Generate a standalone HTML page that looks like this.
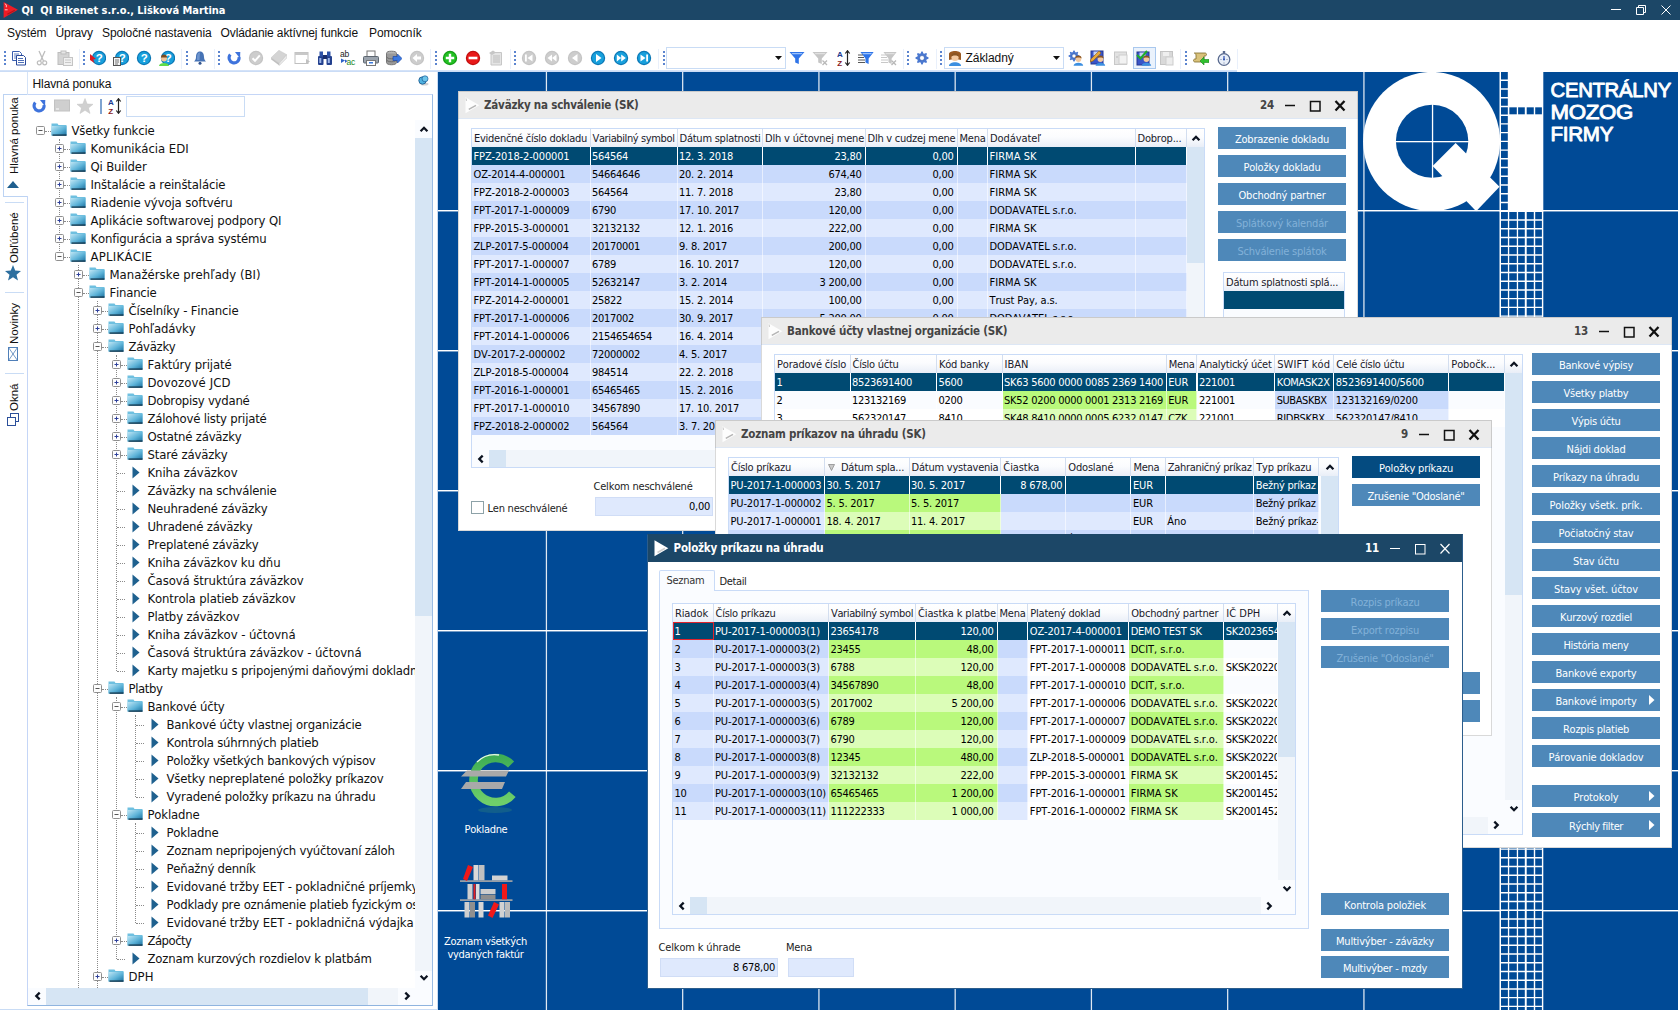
<!DOCTYPE html><html lang="sk"><head><meta charset="utf-8"><title>QI Bikenet s.r.o.</title><style>
*{box-sizing:border-box;margin:0;padding:0}
html,body{width:1680px;height:1010px;overflow:hidden;background:#fff}
body{position:relative;font-family:"DejaVu Sans Condensed","DejaVu Sans","Liberation Sans",sans-serif;font-size:11px;color:#000;letter-spacing:-0.3px;font-kerning:none;font-variant-ligatures:none}
.abs{position:absolute}
#titlebar{position:absolute;left:0;top:0;width:1680px;height:20px;background:#1c4767;color:#fff;font-weight:bold;font-size:11px;letter-spacing:-0.04px;white-space:pre}
#titlebar span{position:absolute;left:21.500px;top:4px;line-height:14px}
#menubar{position:absolute;left:0;top:20px;width:1680px;height:25px;background:#fff;font-family:"Liberation Sans",sans-serif;font-size:12px;letter-spacing:-0.1px;color:#111}
#menubar span{position:absolute;top:5px;line-height:16px;white-space:nowrap}
#toolbar{position:absolute;left:0;top:45px;width:1680px;height:27px;background:#fff}
#tbline{position:absolute;left:0;top:70px;width:1237px;height:2px;background:linear-gradient(#d9e6f9,#c5d9f5)}
.ico{position:absolute;top:50px;width:16px;height:16px}
.grip{position:absolute;top:50px;width:3px;height:17px}
#desk{position:absolute;left:438px;top:72px;width:1240px;height:938px;background:#004a96;overflow:hidden}
.win{position:absolute;background:#fff;overflow:hidden}
.wb{position:absolute;left:0;top:0;right:0;bottom:0;border:1px solid rgba(120,120,120,.28);pointer-events:none}
.wt{position:absolute;left:0;top:0;right:0;height:28px;background:#ebebeb;border-bottom:1px solid #dde7f5}
.wt .t{position:absolute;left:26px;top:7px;font-weight:bold;font-size:11.5px;letter-spacing:-0.2px;color:#444;white-space:nowrap;line-height:15px}
.wt .n{position:absolute;top:7px;font-weight:bold;font-size:11.5px;color:#444;line-height:15px;text-align:right;width:30px;letter-spacing:-0.2px}
.wt svg{position:absolute}
.grid{position:absolute;background:#fafcff;border:1px solid #c9dbf7;overflow:hidden}
.gh{position:absolute;top:0;height:18px;background:linear-gradient(#ffffff,#fbfcfe 45%,#e9eef7);border-right:1px solid #d3deef;padding:3px 0 0 2px;white-space:nowrap;overflow:hidden;color:#1a1a2a;line-height:13px;letter-spacing:-0.23px}
.c{position:absolute;height:18px;padding:3px 0 0 1.500px;white-space:nowrap;overflow:hidden;line-height:13px;letter-spacing:0.05px;border-right:1px solid rgba(255,255,255,.55)}
.c.r{text-align:right;padding-right:3px;padding-left:0}
.c.s{background:#004a72;color:#fff;border-right:1px solid #fff}
.btn{position:absolute;height:22px;background:#4e88b9;color:#fff;text-align:center;line-height:21px;white-space:nowrap;padding-top:2px}
.btn.d{color:#82b1d8}
.btn.a{background:#044b80}
.sb{position:absolute;background:#f1f5fa}
.th{position:absolute;background:#d6e5f4}
.fld{position:absolute;background:#dfe9fd;border:1px solid #d0ddf6;text-align:right;padding:2px 2px 0 0;line-height:13px;letter-spacing:0.05px}
.lbl{position:absolute;white-space:nowrap;line-height:13px;color:#222}
#left{position:absolute;left:0;top:72px;width:438px;height:938px;background:#fff}
.tr{position:absolute;height:18px;line-height:17px;font-size:13px;letter-spacing:-0.1px;white-space:nowrap;color:#111}
.vt{position:absolute;transform-origin:0 0;transform:rotate(-90deg);white-space:nowrap;font-family:"Liberation Sans",sans-serif;font-size:11.5px;letter-spacing:0;color:#111;line-height:14px}
</style></head><body>
<div id="titlebar">
<svg class="abs" style="left:2px;top:2px" width="18" height="16" viewBox="0 0 18 16"><polygon points="1.600,0 15.900,7.700 1.600,15.900" fill="#ee1c25"/><path d="M5.400 12.200l7.300-4" stroke="#b3151c" stroke-width="1.300"/><path d="M2.800 1.800l1.500 1v2.500M2.800 7.800h2.800" stroke="#ffd9d9" stroke-width=".9" fill="none"/></svg>
<span>QI  QI Bikenet s.r.o., Lišková Martina</span>
<svg class="abs" style="left:1606px;top:0" width="74" height="20" viewBox="0 0 74 20" fill="none" stroke="#fff" stroke-width="1"><path d="M5 9.5H15"/><path d="M30.5 7.5h7v7h-7zM32.5 7.5v-2h7v7h-2"/><path d="M55.5 5.5l9 9M64.5 5.5l-9 9"/></svg>
</div>
<div id="menubar">
<span style="left:7px">Systém</span>
<span style="left:55.5px">Úpravy</span>
<span style="left:102px">Spoločné nastavenia</span>
<span style="left:220.5px">Ovládanie aktívnej funkcie</span>
<span style="left:369px">Pomocník</span>
</div>
<div id="toolbar"></div><div id="tbline"></div>
<div class="abs" style="left:78.5px;top:49px;width:1px;height:20px;background:#e9f0fb"></div>
<div class="abs" style="left:181px;top:49px;width:1px;height:20px;background:#e9f0fb"></div>
<div class="abs" style="left:213.5px;top:49px;width:1px;height:20px;background:#e9f0fb"></div>
<div class="abs" style="left:430px;top:49px;width:1px;height:20px;background:#e9f0fb"></div>
<div class="abs" style="left:510px;top:49px;width:1px;height:20px;background:#e9f0fb"></div>
<div class="abs" style="left:658px;top:49px;width:1px;height:20px;background:#e9f0fb"></div>
<div class="abs" style="left:903px;top:49px;width:1px;height:20px;background:#e9f0fb"></div>
<div class="abs" style="left:936px;top:49px;width:1px;height:20px;background:#e9f0fb"></div>
<div class="abs" style="left:1180px;top:49px;width:1px;height:20px;background:#e9f0fb"></div>
<div class="abs" style="left:1237px;top:49px;width:1px;height:20px;background:#e9f0fb"></div>
<div class="abs" style="left:1133px;top:47px;width:23px;height:22px;border:1px solid #a9c8ee;background:#eaf2fc"></div>
<svg class="abs" style="left:4px;top:50px" width="3" height="17" viewBox="0 0 3 17"><rect x="0" y="1" width="2" height="2" fill="#5b84cf"/><rect x="0" y="5" width="2" height="2" fill="#5b84cf"/><rect x="0" y="9" width="2" height="2" fill="#5b84cf"/><rect x="0" y="13" width="2" height="2" fill="#5b84cf"/></svg>
<svg class="abs" style="left:10.5px;top:50px" width="16" height="16" viewBox="0 0 16 16"><path d="M1.5 1.5h7l2 2v7h-9z" fill="#fff" stroke="#3a5fb0"/><path d="M3 4h5M3 6h6M3 8h6" stroke="#3a5fb0" stroke-width=".8"/><path d="M5.5 5.5h7l2 2v7.5h-9z" fill="#fff" stroke="#2a4a9a"/><path d="M7 8.5h5M7 10.5h6M7 12.5h6" stroke="#3a5fb0" stroke-width=".9"/></svg>
<svg class="abs" style="left:34px;top:50px" width="16" height="16" viewBox="0 0 16 16"><path d="M5 1l4.5 10M11 1L6.5 11" stroke="#bdbdbd" stroke-width="1.3" fill="none"/><circle cx="5.3" cy="12.8" r="2" fill="none" stroke="#bdbdbd" stroke-width="1.2"/><circle cx="10.7" cy="12.8" r="2" fill="none" stroke="#bdbdbd" stroke-width="1.2"/></svg>
<svg class="abs" style="left:57px;top:50px" width="16" height="16" viewBox="0 0 16 16"><rect x="1" y="2.5" width="11" height="12" fill="#d4d4d4" stroke="#bdbdbd"/><rect x="4" y="1" width="5" height="3" fill="#e6e6e6" stroke="#bdbdbd"/><rect x="6.5" y="7.5" width="9" height="8" fill="#f0f0f0" stroke="#c4c4c4"/><path d="M8 10h6M8 12.5h6" stroke="#c8c8c8"/></svg>
<svg class="abs" style="left:83px;top:50px" width="3" height="17" viewBox="0 0 3 17"><rect x="0" y="1" width="2" height="2" fill="#5b84cf"/><rect x="0" y="5" width="2" height="2" fill="#5b84cf"/><rect x="0" y="9" width="2" height="2" fill="#5b84cf"/><rect x="0" y="13" width="2" height="2" fill="#5b84cf"/></svg>
<svg class="abs" style="left:90px;top:50px" width="16" height="16" viewBox="0 0 16 16"><g transform="translate(1,0)"><circle cx="8" cy="8" r="7.2" fill="#0b77b5"/><circle cx="8" cy="8" r="6" fill="#18a0dc"/><text x="8" y="12.2" font-family="Liberation Sans,sans-serif" font-weight="bold" font-size="11.5" fill="#fff" text-anchor="middle">?</text></g><polygon points="0,4 6,9 3,9.5 4.5,13 0,10" fill="#e01b24"/></svg>
<svg class="abs" style="left:113px;top:50px" width="16" height="16" viewBox="0 0 16 16"><g transform="translate(1,0)"><circle cx="8" cy="8" r="7.2" fill="#0b77b5"/><circle cx="8" cy="8" r="6" fill="#18a0dc"/><text x="8" y="12.2" font-family="Liberation Sans,sans-serif" font-weight="bold" font-size="11.5" fill="#fff" text-anchor="middle">?</text></g><rect x="0.5" y="7.5" width="7" height="8" fill="#f4f4f4" stroke="#555"/><path d="M2 10h4M2 12h4M2 14h3" stroke="#555" stroke-width=".8"/></svg>
<svg class="abs" style="left:136px;top:50px" width="16" height="16" viewBox="0 0 16 16"><circle cx="8" cy="8" r="7.2" fill="#0b77b5"/><circle cx="8" cy="8" r="6" fill="#18a0dc"/><text x="8" y="12.2" font-family="Liberation Sans,sans-serif" font-weight="bold" font-size="11.5" fill="#fff" text-anchor="middle">?</text></svg>
<svg class="abs" style="left:159px;top:50px" width="16" height="16" viewBox="0 0 16 16"><g transform="translate(1,0)"><circle cx="8" cy="8" r="7.2" fill="#0b77b5"/><circle cx="8" cy="8" r="6" fill="#18a0dc"/><text x="8" y="12.2" font-family="Liberation Sans,sans-serif" font-weight="bold" font-size="11.5" fill="#fff" text-anchor="middle">?</text></g><circle cx="5" cy="8.5" r="3" fill="#f0c49a"/><path d="M2 7.5a3 3 0 0 1 6 0z" fill="#7a4a1e"/><path d="M0 16c0-4 10-4 10 0z" fill="#5fdc4a"/></svg>
<svg class="abs" style="left:185.5px;top:50px" width="3" height="17" viewBox="0 0 3 17"><rect x="0" y="1" width="2" height="2" fill="#5b84cf"/><rect x="0" y="5" width="2" height="2" fill="#5b84cf"/><rect x="0" y="9" width="2" height="2" fill="#5b84cf"/><rect x="0" y="13" width="2" height="2" fill="#5b84cf"/></svg>
<svg class="abs" style="left:192px;top:50px" width="16" height="16" viewBox="0 0 16 16"><path d="M8 1.5c-3 0-4 2.5-4 5.5 0 2.5-1 3.5-2 4.5h12c-1-1-2-2-2-4.500 0-3-1-5.500-4-5.500z" fill="#4673b5"/><path d="M8 2.500c-2 0-3 2-3 4.500v3h2.500z" fill="#7ea3d8" opacity=".7"/><circle cx="8" cy="13.200" r="1.500" fill="#35568f"/></svg>
<svg class="abs" style="left:218px;top:50px" width="3" height="17" viewBox="0 0 3 17"><rect x="0" y="1" width="2" height="2" fill="#5b84cf"/><rect x="0" y="5" width="2" height="2" fill="#5b84cf"/><rect x="0" y="9" width="2" height="2" fill="#5b84cf"/><rect x="0" y="13" width="2" height="2" fill="#5b84cf"/></svg>
<svg class="abs" style="left:225.5px;top:50px" width="16" height="16" viewBox="0 0 16 16"><path d="M4.300 4.600A5 5 0 1 0 13 7" fill="none" stroke="#3e73dc" stroke-width="3.100"/><polygon points="9,2 14.300,2 14,8.600" fill="#3e73dc"/></svg>
<svg class="abs" style="left:248px;top:50px" width="16" height="16" viewBox="0 0 16 16"><circle cx="8" cy="8" r="7.2" fill="#c4c4c4"/><circle cx="8" cy="8" r="6" fill="#cdcdcd"/><path d="M4.500 8.200l2.500 2.600 4.800-5.500" fill="none" stroke="#fff" stroke-width="2"/></svg>
<svg class="abs" style="left:271px;top:50px" width="16" height="16" viewBox="0 0 16 16"><polygon points="0.200,7.600 7.900,0.300 15.800,4.700 8.300,13.200" fill="#d4d4d4" stroke="#c6c6c6" stroke-width=".5"/><polygon points="0.200,7.600 8.300,13.200 8.300,15.400 0.200,9.600" fill="#c0c0c0"/><polygon points="8.300,13.200 15.800,4.700 15.800,7.900 8.300,15.400" fill="#ececec" stroke="#c6c6c6" stroke-width=".6"/></svg>
<svg class="abs" style="left:294px;top:50px" width="16" height="16" viewBox="0 0 16 16"><rect x="1" y="2.500" width="13" height="11" fill="#fff" stroke="#c0c0c0"/><rect x="1" y="2.500" width="13" height="2.500" fill="#c8c8c8"/><polygon points="12,9 16,11.500 12,14" fill="#c0c0c0"/></svg>
<svg class="abs" style="left:317px;top:50px" width="16" height="16" viewBox="0 0 16 16"><rect x="1" y="6" width="5.500" height="9" rx="1" fill="#23408e"/><rect x="9.500" y="6" width="5.500" height="9" rx="1" fill="#23408e"/><rect x="2.500" y="1.500" width="3.500" height="5" fill="#2e53a8"/><rect x="10" y="1.500" width="3.500" height="5" fill="#2e53a8"/><rect x="6" y="5" width="4" height="4" fill="#1a2f6e"/><rect x="2.300" y="8" width="2" height="5" fill="#9db6e8"/><rect x="10.800" y="8" width="2" height="5" fill="#9db6e8"/></svg>
<svg class="abs" style="left:339.5px;top:50px" width="16" height="16" viewBox="0 0 16 16"><text x="0" y="6.500" font-family="Liberation Sans,sans-serif" font-size="8.500" fill="#222">ab</text><text x="6.500" y="15" font-family="Liberation Sans,sans-serif" font-size="8.500" fill="#1d8a2a">ac</text><path d="M1 8.500l4 2-4 2.500z M5 9.500l2.500 1.500-2.500 2" fill="#2d62c8"/></svg>
<svg class="abs" style="left:363px;top:50px" width="16" height="16" viewBox="0 0 16 16"><rect x="4" y="1" width="8" height="6" fill="#fff" stroke="#777"/><rect x="0.500" y="6.500" width="15" height="6.500" rx="1" fill="#9aa3ad" stroke="#5d6670"/><rect x="3.500" y="10.500" width="9" height="5" fill="#fff" stroke="#777"/><rect x="6" y="12" width="4" height="1.500" fill="#3b7be0"/></svg>
<svg class="abs" style="left:386px;top:50px" width="16" height="16" viewBox="0 0 16 16"><ellipse cx="5.500" cy="3.500" rx="5" ry="2.300" fill="#b5b5b5" stroke="#777"/><path d="M0.500 3.500v9c0 3 10 3 10 0v-9" fill="#9a9a9a" stroke="#777"/><path d="M0.500 6.500c0 3 10 3 10 0M0.500 9.500c0 3 10 3 10 0" fill="none" stroke="#6e6e6e"/><polygon points="7,6.500 11.500,6.500 11.500,4 16,8.500 11.500,13 11.500,10.500 7,10.500" fill="#3a78e0" stroke="#1c49a8" stroke-width=".7"/></svg>
<svg class="abs" style="left:409px;top:50px" width="16" height="16" viewBox="0 0 16 16"><circle cx="8" cy="8" r="7.2" fill="#c4c4c4"/><circle cx="8" cy="8" r="6" fill="#cdcdcd"/><polygon points="3.500,8 8,4 8,6.500 12,6.500 12,9.500 8,9.500 8,12" fill="#fff"/></svg>
<svg class="abs" style="left:435px;top:50px" width="3" height="17" viewBox="0 0 3 17"><rect x="0" y="1" width="2" height="2" fill="#5b84cf"/><rect x="0" y="5" width="2" height="2" fill="#5b84cf"/><rect x="0" y="9" width="2" height="2" fill="#5b84cf"/><rect x="0" y="13" width="2" height="2" fill="#5b84cf"/></svg>
<svg class="abs" style="left:442px;top:50px" width="16" height="16" viewBox="0 0 16 16"><circle cx="8" cy="8" r="7.2" fill="#149c14"/><circle cx="8" cy="8" r="6" fill="#22c022"/><path d="M8 3.800v8.400M3.800 8h8.400" stroke="#fff" stroke-width="2.400"/></svg>
<svg class="abs" style="left:465px;top:50px" width="16" height="16" viewBox="0 0 16 16"><circle cx="8" cy="8" r="7.2" fill="#c00d0d"/><circle cx="8" cy="8" r="6" fill="#e81818"/><path d="M3.600 8h8.800" stroke="#fff" stroke-width="2.600"/></svg>
<svg class="abs" style="left:487.5px;top:50px" width="16" height="16" viewBox="0 0 16 16"><polygon points="3,2.500 13.500,2.500 13.500,15 3,15" fill="#e4e4e4" stroke="#c6c6c6"/><path d="M5 6h7M5 8h7M5 10h7M5 12h7" stroke="#bdbdbd"/><polygon points="1,3 5,0.500 8,2.500 4,5" fill="#c6c6c6"/></svg>
<svg class="abs" style="left:514px;top:50px" width="3" height="17" viewBox="0 0 3 17"><rect x="0" y="1" width="2" height="2" fill="#5b84cf"/><rect x="0" y="5" width="2" height="2" fill="#5b84cf"/><rect x="0" y="9" width="2" height="2" fill="#5b84cf"/><rect x="0" y="13" width="2" height="2" fill="#5b84cf"/></svg>
<svg class="abs" style="left:521px;top:50px" width="16" height="16" viewBox="0 0 16 16"><circle cx="8" cy="8" r="7.2" fill="#c4c4c4"/><circle cx="8" cy="8" r="6" fill="#cdcdcd"/><rect x="4" y="4.500" width="1.800" height="7" fill="#fff"/><polygon points="11.500,4.500 11.500,11.500 6.500,8" fill="#fff"/></svg>
<svg class="abs" style="left:544px;top:50px" width="16" height="16" viewBox="0 0 16 16"><circle cx="8" cy="8" r="7.2" fill="#c4c4c4"/><circle cx="8" cy="8" r="6" fill="#cdcdcd"/><polygon points="8,4.500 8,11.500 3.500,8" fill="#fff"/><polygon points="12.500,4.500 12.500,11.500 8,8" fill="#fff"/></svg>
<svg class="abs" style="left:567px;top:50px" width="16" height="16" viewBox="0 0 16 16"><circle cx="8" cy="8" r="7.2" fill="#c4c4c4"/><circle cx="8" cy="8" r="6" fill="#cdcdcd"/><polygon points="10.500,4 10.500,12 5,8" fill="#fff"/></svg>
<svg class="abs" style="left:590px;top:50px" width="16" height="16" viewBox="0 0 16 16"><circle cx="8" cy="8" r="7.2" fill="#0b77b5"/><circle cx="8" cy="8" r="6" fill="#18a0dc"/><polygon points="6,4 6,12 11.500,8" fill="#fff"/></svg>
<svg class="abs" style="left:613px;top:50px" width="16" height="16" viewBox="0 0 16 16"><circle cx="8" cy="8" r="7.2" fill="#0b77b5"/><circle cx="8" cy="8" r="6" fill="#18a0dc"/><polygon points="3.800,4.500 3.800,11.500 8.200,8" fill="#fff"/><polygon points="8.200,4.500 8.200,11.500 12.800,8" fill="#fff"/></svg>
<svg class="abs" style="left:636px;top:50px" width="16" height="16" viewBox="0 0 16 16"><circle cx="8" cy="8" r="7.2" fill="#0b77b5"/><circle cx="8" cy="8" r="6" fill="#18a0dc"/><rect x="10.200" y="4.500" width="1.800" height="7" fill="#fff"/><polygon points="4.500,4.500 4.500,11.500 9.500,8" fill="#fff"/></svg>
<svg class="abs" style="left:662.5px;top:50px" width="3" height="17" viewBox="0 0 3 17"><rect x="0" y="1" width="2" height="2" fill="#5b84cf"/><rect x="0" y="5" width="2" height="2" fill="#5b84cf"/><rect x="0" y="9" width="2" height="2" fill="#5b84cf"/><rect x="0" y="13" width="2" height="2" fill="#5b84cf"/></svg>
<svg class="abs" style="left:789px;top:50px" width="16" height="16" viewBox="0 0 16 16"><polygon points="0.500,2 15.500,2 9.800,8.500 9.800,14 6.200,12.500 6.200,8.500" fill="#2f74e8"/><polygon points="2.500,3 13.500,3 12.500,4.200 3.500,4.200" fill="#9cc2fb"/></svg>
<svg class="abs" style="left:812px;top:50px" width="16" height="16" viewBox="0 0 16 16"><polygon points="0.500,2 15.500,2 9.800,8.500 9.800,14 6.200,12.500 6.200,8.500" fill="#c6c6c6"/><polygon points="2.500,3 13.500,3 12.500,4.200 3.500,4.200" fill="#e0e0e0"/><path d="M10.500 10.500l4.500 4.500M15 10.500l-4.500 4.500" stroke="#b8b8b8" stroke-width="1.300"/></svg>
<svg class="abs" style="left:837px;top:50px" width="16" height="16" viewBox="0 0 16 16"><text x="0" y="7" font-family="Liberation Sans,sans-serif" font-weight="bold" font-size="8" fill="#1d3a8f">A</text><text x="0.300" y="15.500" font-family="Liberation Sans,sans-serif" font-weight="bold" font-size="8" fill="#8a1c1c">Z</text><path d="M10.500 1v14M8.300 3.500l2.200-2.800 2.200 2.800M8.300 12.500l2.200 2.800 2.200-2.800" fill="none" stroke="#222" stroke-width="1.200"/></svg>
<svg class="abs" style="left:858px;top:50px" width="16" height="16" viewBox="0 0 16 16"><g transform="translate(2,0) scale(.88,1)"><polygon points="0.500,2 15.500,2 9.800,8.500 9.800,14 6.200,12.500 6.200,8.500" fill="#2f74e8"/><polygon points="2.500,3 13.500,3 12.500,4.200 3.500,4.200" fill="#9cc2fb"/></g><path d="M0 5h5M0 7.500h6M0 10h7M0 12.500h7" stroke="#444" stroke-width=".9"/></svg>
<svg class="abs" style="left:881px;top:50px" width="16" height="16" viewBox="0 0 16 16"><g transform="translate(2,0) scale(.88,1)"><polygon points="0.500,2 15.500,2 9.800,8.500 9.800,14 6.200,12.500 6.200,8.500" fill="#c6c6c6"/><polygon points="2.500,3 13.500,3 12.500,4.200 3.500,4.200" fill="#e0e0e0"/></g><path d="M0 5h5M0 7.500h6M0 10h7M0 12.500h7" stroke="#c2c2c2" stroke-width=".9"/><path d="M10.500 10.500l4.500 4.500M15 10.500l-4.500 4.500" stroke="#b8b8b8" stroke-width="1.300"/></svg>
<svg class="abs" style="left:907px;top:50px" width="3" height="17" viewBox="0 0 3 17"><rect x="0" y="1" width="2" height="2" fill="#5b84cf"/><rect x="0" y="5" width="2" height="2" fill="#5b84cf"/><rect x="0" y="9" width="2" height="2" fill="#5b84cf"/><rect x="0" y="13" width="2" height="2" fill="#5b84cf"/></svg>
<svg class="abs" style="left:914px;top:50px" width="16" height="16" viewBox="0 0 16 16"><polygon points="14.47,7.35 14.47,8.63 12.61,9.39 12.25,10.26 13.03,12.11 12.13,13.02 10.28,12.24 9.40,12.60 8.65,14.47 7.37,14.47 6.61,12.61 5.74,12.25 3.89,13.03 2.98,12.13 3.76,10.28 3.40,9.40 1.53,8.65 1.53,7.37 3.39,6.61 3.75,5.74 2.97,3.89 3.87,2.98 5.72,3.76 6.60,3.40 7.35,1.53 8.63,1.53 9.39,3.39 10.26,3.75 12.11,2.97 13.02,3.87 12.24,5.72 12.60,6.60" fill="#4a78d0"/><circle cx="8" cy="8" r="2.47" fill="#fff"/><circle cx="8" cy="8" r="2.47" fill="none" stroke="#2d55a8" stroke-width=".6"/></svg>
<svg class="abs" style="left:940px;top:50px" width="3" height="17" viewBox="0 0 3 17"><rect x="0" y="1" width="2" height="2" fill="#5b84cf"/><rect x="0" y="5" width="2" height="2" fill="#5b84cf"/><rect x="0" y="9" width="2" height="2" fill="#5b84cf"/><rect x="0" y="13" width="2" height="2" fill="#5b84cf"/></svg>
<svg class="abs" style="left:1067.5px;top:50px" width="16" height="16" viewBox="0 0 16 16"><polygon points="11.47,5.45 11.47,6.53 9.90,7.17 9.59,7.91 10.26,9.48 9.50,10.25 7.93,9.59 7.19,9.89 6.55,11.47 5.47,11.47 4.83,9.90 4.09,9.59 2.52,10.26 1.75,9.50 2.41,7.93 2.11,7.19 0.53,6.55 0.53,5.47 2.10,4.83 2.41,4.09 1.74,2.52 2.50,1.75 4.07,2.41 4.81,2.11 5.45,0.53 6.53,0.53 7.17,2.10 7.91,2.41 9.48,1.74 10.25,2.50 9.59,4.07 9.89,4.81" fill="#4a78d0"/><circle cx="6" cy="6" r="2.09" fill="#fff"/><circle cx="6" cy="6" r="2.09" fill="none" stroke="#2d55a8" stroke-width=".6"/><g transform="translate(4,3) scale(.8)"><g transform="translate(0,0)"><circle cx="8" cy="7.500" r="3.600" fill="#f3c9a0"/><path d="M4 7a4 4 0 0 1 8 0c-1-2-7-2-8 0z" fill="#8a5522"/><path d="M2 16c0-5 12-5 12 0z" fill="#3c8fe0"/></g></g></svg>
<svg class="abs" style="left:1090px;top:50px" width="16" height="16" viewBox="0 0 16 16"><rect x="1" y="1" width="12" height="13" fill="#3a55c8" stroke="#25368f"/><rect x="3.500" y="1.500" width="6" height="4" fill="#c8d4f5"/><g transform="translate(4,3) scale(.8)"><g transform="translate(0,0)"><circle cx="8" cy="7.500" r="3.600" fill="#f3c9a0"/><path d="M4 7a4 4 0 0 1 8 0c-1-2-7-2-8 0z" fill="#8a5522"/><path d="M2 16c0-5 12-5 12 0z" fill="#3c8fe0"/></g></g><path d="M1 9l8-8 2 2-8 8-3 1z" fill="#e8a93a" stroke="#8f5d12" stroke-width=".6"/></svg>
<svg class="abs" style="left:1113px;top:50px" width="16" height="16" viewBox="0 0 16 16"><rect x="1.500" y="2" width="12" height="12.500" fill="#e2e2e2" stroke="#c8c8c8"/><rect x="6" y="5" width="8" height="9" fill="#f2f2f2" stroke="#cdcdcd"/><path d="M3 7h2" stroke="#bbb"/></svg>
<svg class="abs" style="left:1136px;top:50px" width="16" height="16" viewBox="0 0 16 16"><rect x="1" y="2" width="12" height="13" fill="#3a55c8" stroke="#25368f"/><rect x="3.500" y="2.500" width="6" height="4" fill="#c8d4f5"/><g transform="translate(4,3) scale(.8)"><g transform="translate(0,0)"><circle cx="8" cy="7.500" r="3.600" fill="#f3c9a0"/><path d="M4 7a4 4 0 0 1 8 0c-1-2-7-2-8 0z" fill="#8a5522"/><path d="M2 16c0-5 12-5 12 0z" fill="#3c8fe0"/></g></g><path d="M1 5l3.500 3.500 6.500-7.500" fill="none" stroke="#1fae2a" stroke-width="2"/></svg>
<svg class="abs" style="left:1159px;top:50px" width="16" height="16" viewBox="0 0 16 16"><rect x="1.500" y="1.500" width="12" height="13" fill="#d9d9d9" stroke="#c4c4c4"/><rect x="4" y="2" width="6" height="4" fill="#efefef"/><rect x="7" y="7" width="7" height="8" fill="#ececec" stroke="#cdcdcd"/></svg>
<svg class="abs" style="left:1184.5px;top:50px" width="3" height="17" viewBox="0 0 3 17"><rect x="0" y="1" width="2" height="2" fill="#5b84cf"/><rect x="0" y="5" width="2" height="2" fill="#5b84cf"/><rect x="0" y="9" width="2" height="2" fill="#5b84cf"/><rect x="0" y="13" width="2" height="2" fill="#5b84cf"/></svg>
<svg class="abs" style="left:1193px;top:50px" width="16" height="16" viewBox="0 0 16 16"><path d="M2 3h10c2 0 2 3 0 3h-1v6H2c-2 0-2-3 0-3h1V5c0-2-3-2-1-2z" fill="#d9c27a" stroke="#7d6a2a" stroke-width=".8"/><polygon points="7,11 11,7 11,9.500 16,9.500 16,12.500 11,12.500 11,15" fill="#2fc02f" stroke="#18861a" stroke-width=".6"/></svg>
<svg class="abs" style="left:1216px;top:50px" width="16" height="16" viewBox="0 0 16 16"><circle cx="8" cy="9.500" r="5.800" fill="#e8eef8" stroke="#5a6b8f" stroke-width="1.300"/><rect x="6.800" y="1" width="2.400" height="2.500" fill="#5a6b8f"/><path d="M8 9.500V6" stroke="#2c4fb0" stroke-width="1.200"/><circle cx="8" cy="9.500" r="1" fill="#2c4fb0"/><path d="M8 13.500v-1M4.500 9.500h1M10.500 9.500h1" stroke="#5a6b8f" stroke-width=".8"/></svg>
<div class="abs" style="left:666px;top:47px;width:120px;height:22px;border:1px solid #c9dcf5;background:#fff"></div>
<svg class="abs" style="left:775px;top:56px" width="7" height="4"><polygon points="0,0 7,0 3.500,4" fill="#111"/></svg>
<div class="abs" style="left:944px;top:47px;width:120px;height:22px;border:1px solid #c9dcf5;background:#fff"></div>
<svg class="abs" style="left:947px;top:50px" width="16" height="16" viewBox="0 0 16 16"><path d="M2 4c0-4 12-4 12 0v6c-2-1-10-1-12 0z" fill="#9a5a22"/><g transform="translate(0,0)"><circle cx="8" cy="7.500" r="3.600" fill="#f3c9a0"/><path d="M4 7a4 4 0 0 1 8 0c-1-2-7-2-8 0z" fill="#8a5522"/><path d="M2 16c0-5 12-5 12 0z" fill="#3c8fe0"/></g></svg>
<div class="abs" style="left:965.500px;top:50px;font-family:'Liberation Sans',sans-serif;font-size:12px;letter-spacing:-0.050px;line-height:16px;color:#111">Základný</div>
<svg class="abs" style="left:1053px;top:56px" width="7" height="4"><polygon points="0,0 7,0 3.500,4" fill="#111"/></svg>
<div id="left">
<div class="abs" style="left:3px;top:22px;width:25px;height:103px;border:1px solid #bcd3f3;border-right:none;background:#fff"></div>
<div class="abs" style="left:27px;top:22px;width:406px;height:912px;border:1px solid #c5d6f7;border-right-color:#9bbce3;border-bottom:1px solid #8fb4df;background:#fff"></div>
<div class="abs" style="left:4px;top:23px;width:25px;height:101px;background:#fff"></div>
<div class="abs" style="left:27px;top:0px;width:1px;height:23px;background:#d5e3f7"></div>
<div class="abs" style="left:437px;top:0;width:1px;height:938px;background:#c9dcf5"></div>
<div class="abs" style="left:0;top:937px;width:438px;height:1px;background:#c9dcf5"></div>
<div class="abs" style="left:32.500px;top:4px;font-family:'Liberation Sans',sans-serif;font-size:12px;letter-spacing:-0.100px;line-height:16px;color:#111">Hlavná ponuka</div>
<svg class="abs" style="left:418px;top:3px" width="12" height="12" viewBox="0 0 12 12"><ellipse cx="6.500" cy="9" rx="4" ry="1.500" fill="#000" opacity=".18"/><circle cx="4.500" cy="5.500" r="3.700" fill="#4fb2e0" stroke="#17558c" stroke-width=".8"/><circle cx="7" cy="3.800" r="3" fill="#6cc4ea" stroke="#1b5f99" stroke-width=".7"/></svg>
<div class="vt" style="left:6.5px;top:101.5px">Hlavná ponuka</div>
<svg class="abs" style="left:7px;top:109px" width="12" height="7" viewBox="0 0 12 7"><polygon points="0,7 6,0 12,7" fill="#1f5f8f"/></svg>
<div class="vt" style="left:6.5px;top:190.5px">Obľúbené</div>
<svg class="abs" style="left:5px;top:193px" width="16" height="16" viewBox="0 0 16 16"><polygon points="8,0 10.200,5.600 16,6 11.500,9.800 13,15.500 8,12.300 3,15.500 4.500,9.800 0,6 5.800,5.600" fill="#2d6f9f"/></svg>
<div class="vt" style="left:6.5px;top:272px">Novinky</div>
<svg class="abs" style="left:8px;top:275px" width="10" height="14" viewBox="0 0 10 14"><rect x="0.500" y="0.500" width="9" height="13" fill="#fff" stroke="#4f7fb8"/><path d="M0.500 0.500l4.500 6.500 4.500-6.500M0.500 13.500l4.500-6.500 4.500 6.500" fill="none" stroke="#4f7fb8" stroke-width=".8"/></svg>
<div class="vt" style="left:6.5px;top:338.5px">Okná</div>
<svg class="abs" style="left:7px;top:341px" width="13" height="14" viewBox="0 0 13 14"><rect x="3.500" y="0.500" width="8" height="8" fill="#fff" stroke="#2b4f9a"/><rect x="0.500" y="4.500" width="8" height="8" fill="#fff" stroke="#2b4f9a"/></svg>
<div class="abs" style="left:5px;top:130px;width:19px;height:1px;background:#c9dcf5"></div>
<div class="abs" style="left:5px;top:220px;width:19px;height:1px;background:#c9dcf5"></div>
<div class="abs" style="left:5px;top:301px;width:19px;height:1px;background:#c9dcf5"></div>
<svg class="abs" style="left:31px;top:26px" width="16" height="16" viewBox="0 0 16 16"><path d="M4.300 4.600A5 5 0 1 0 13 7" fill="none" stroke="#3e73dc" stroke-width="3.100"/><polygon points="9,2 14.300,2 14,8.600" fill="#3e73dc"/></svg>
<svg class="abs" style="left:54px;top:27px" width="16" height="14" viewBox="0 0 16 14"><rect x="0.500" y="1" width="15" height="11" fill="#cfcfcf" stroke="#c2c2c2"/><rect x="2" y="9" width="3" height="2" fill="#e6e6e6"/></svg>
<svg class="abs" style="left:77px;top:26px" width="16" height="16" viewBox="0 0 16 16"><polygon points="8,0.500 10.200,6 16,6.300 11.500,10 13,15.500 8,12.300 3,15.500 4.500,10 0,6.300 5.800,6" fill="#d0d0d0" stroke="#c4c4c4" stroke-width=".5"/></svg>
<div class="abs" style="left:100px;top:27px;width:2px;height:15px;background:#7fa3d0"></div>
<svg class="abs" style="left:108px;top:26px" width="16" height="16" viewBox="0 0 16 16"><text x="0" y="7" font-family="Liberation Sans,sans-serif" font-weight="bold" font-size="8" fill="#1d3a8f">A</text><text x="0.300" y="15.500" font-family="Liberation Sans,sans-serif" font-weight="bold" font-size="8" fill="#8a1c1c">Z</text><path d="M10.500 1v14M8.300 3.500l2.200-2.800 2.200 2.800M8.300 12.500l2.200 2.800 2.200-2.800" fill="none" stroke="#222" stroke-width="1.200"/></svg>
<div class="abs" style="left:126px;top:23.5px;width:119px;height:21px;border:1px solid #c9dcf5;background:#fff"></div>
<svg width="0" height="0" class="abs"><defs><linearGradient id="fg" x1="0" y1="0" x2="1" y2="1"><stop offset="0" stop-color="#bfe6f5"/><stop offset=".55" stop-color="#5db3d8"/><stop offset="1" stop-color="#1b6f9e"/></linearGradient></defs></svg>
<div class="abs" style="left:28px;top:47px;width:387px;height:869px;overflow:hidden">
<div class="abs" style="left:31px;top:19.5px;width:0;height:118.0px;border-left:1px dotted #8a8a8a"></div>
<div class="abs" style="left:50px;top:145.5px;width:0;height:725.5px;border-left:1px dotted #8a8a8a"></div>
<div class="abs" style="left:69px;top:181.5px;width:0;height:689.5px;border-left:1px dotted #8a8a8a"></div>
<div class="abs" style="left:88px;top:235.5px;width:0;height:316.0px;border-left:1px dotted #8a8a8a"></div>
<div class="abs" style="left:88px;top:577.5px;width:0;height:262.0px;border-left:1px dotted #8a8a8a"></div>
<div class="abs" style="left:107px;top:595.5px;width:0;height:82.0px;border-left:1px dotted #8a8a8a"></div>
<div class="abs" style="left:107px;top:703.5px;width:0;height:100.0px;border-left:1px dotted #8a8a8a"></div>
<div class="abs" style="left:17px;top:11.5px;width:6px;height:0;border-top:1px dotted #8a8a8a"></div>
<svg class="abs" style="left:7.5px;top:7.0px" width="9" height="9"><rect x="0.500" y="0.500" width="8" height="8" rx="1" fill="#fdfdfd" stroke="#8f8f8f"/><path d="M2.500 4.500h4" stroke="#555" stroke-width="1"/></svg>
<svg class="abs" style="left:22.5px;top:3.0px" width="16" height="15" viewBox="0 0 16 15"><path d="M0.500 1.500h6l1 1.500h8v10.500h-15z" fill="#6fc0e0"/><rect x="0.500" y="4" width="15" height="9.500" fill="url(#fg)"/><rect x="1.500" y="12.500" width="14" height="1.200" fill="#0c2a3f"/></svg>
<div class="tr" style="left:43.5px;top:2.5px;letter-spacing:-0.21px;">Všetky funkcie</div>
<div class="abs" style="left:36px;top:29.5px;width:6px;height:0;border-top:1px dotted #8a8a8a"></div>
<svg class="abs" style="left:26.5px;top:25.0px" width="9" height="9"><rect x="0.500" y="0.500" width="8" height="8" rx="1" fill="#fdfdfd" stroke="#8f8f8f"/><path d="M2.500 4.500h4M4.500 2.500v4" stroke="#2d3f9a" stroke-width="1"/></svg>
<svg class="abs" style="left:41.5px;top:21.0px" width="16" height="15" viewBox="0 0 16 15"><path d="M0.500 1.500h6l1 1.500h8v10.500h-15z" fill="#6fc0e0"/><rect x="0.500" y="4" width="15" height="9.500" fill="url(#fg)"/><rect x="1.500" y="12.500" width="14" height="1.200" fill="#0c2a3f"/></svg>
<div class="tr" style="left:62.5px;top:20.5px;letter-spacing:-0.04px;">Komunikácia EDI</div>
<div class="abs" style="left:36px;top:47.5px;width:6px;height:0;border-top:1px dotted #8a8a8a"></div>
<svg class="abs" style="left:26.5px;top:43.0px" width="9" height="9"><rect x="0.500" y="0.500" width="8" height="8" rx="1" fill="#fdfdfd" stroke="#8f8f8f"/><path d="M2.500 4.500h4M4.500 2.500v4" stroke="#2d3f9a" stroke-width="1"/></svg>
<svg class="abs" style="left:41.5px;top:39.0px" width="16" height="15" viewBox="0 0 16 15"><path d="M0.500 1.500h6l1 1.500h8v10.500h-15z" fill="#6fc0e0"/><rect x="0.500" y="4" width="15" height="9.500" fill="url(#fg)"/><rect x="1.500" y="12.500" width="14" height="1.200" fill="#0c2a3f"/></svg>
<div class="tr" style="left:62.5px;top:38.5px;letter-spacing:-0.15px;">Qi Builder</div>
<div class="abs" style="left:36px;top:65.5px;width:6px;height:0;border-top:1px dotted #8a8a8a"></div>
<svg class="abs" style="left:26.5px;top:61.0px" width="9" height="9"><rect x="0.500" y="0.500" width="8" height="8" rx="1" fill="#fdfdfd" stroke="#8f8f8f"/><path d="M2.500 4.500h4M4.500 2.500v4" stroke="#2d3f9a" stroke-width="1"/></svg>
<svg class="abs" style="left:41.5px;top:57.0px" width="16" height="15" viewBox="0 0 16 15"><path d="M0.500 1.500h6l1 1.500h8v10.500h-15z" fill="#6fc0e0"/><rect x="0.500" y="4" width="15" height="9.500" fill="url(#fg)"/><rect x="1.500" y="12.500" width="14" height="1.200" fill="#0c2a3f"/></svg>
<div class="tr" style="left:62.5px;top:56.5px;letter-spacing:-0.14px;">Inštalácie a reinštalácie</div>
<div class="abs" style="left:36px;top:83.5px;width:6px;height:0;border-top:1px dotted #8a8a8a"></div>
<svg class="abs" style="left:26.5px;top:79.0px" width="9" height="9"><rect x="0.500" y="0.500" width="8" height="8" rx="1" fill="#fdfdfd" stroke="#8f8f8f"/><path d="M2.500 4.500h4M4.500 2.500v4" stroke="#2d3f9a" stroke-width="1"/></svg>
<svg class="abs" style="left:41.5px;top:75.0px" width="16" height="15" viewBox="0 0 16 15"><path d="M0.500 1.500h6l1 1.500h8v10.500h-15z" fill="#6fc0e0"/><rect x="0.500" y="4" width="15" height="9.500" fill="url(#fg)"/><rect x="1.500" y="12.500" width="14" height="1.200" fill="#0c2a3f"/></svg>
<div class="tr" style="left:62.5px;top:74.5px;letter-spacing:-0.13px;">Riadenie vývoja softvéru</div>
<div class="abs" style="left:36px;top:101.5px;width:6px;height:0;border-top:1px dotted #8a8a8a"></div>
<svg class="abs" style="left:26.5px;top:97.0px" width="9" height="9"><rect x="0.500" y="0.500" width="8" height="8" rx="1" fill="#fdfdfd" stroke="#8f8f8f"/><path d="M2.500 4.500h4M4.500 2.500v4" stroke="#2d3f9a" stroke-width="1"/></svg>
<svg class="abs" style="left:41.5px;top:93.0px" width="16" height="15" viewBox="0 0 16 15"><path d="M0.500 1.500h6l1 1.500h8v10.500h-15z" fill="#6fc0e0"/><rect x="0.500" y="4" width="15" height="9.500" fill="url(#fg)"/><rect x="1.500" y="12.500" width="14" height="1.200" fill="#0c2a3f"/></svg>
<div class="tr" style="left:62.5px;top:92.5px;letter-spacing:-0.06px;">Aplikácie softwarovej podpory QI</div>
<div class="abs" style="left:36px;top:119.5px;width:6px;height:0;border-top:1px dotted #8a8a8a"></div>
<svg class="abs" style="left:26.5px;top:115.0px" width="9" height="9"><rect x="0.500" y="0.500" width="8" height="8" rx="1" fill="#fdfdfd" stroke="#8f8f8f"/><path d="M2.500 4.500h4M4.500 2.500v4" stroke="#2d3f9a" stroke-width="1"/></svg>
<svg class="abs" style="left:41.5px;top:111.0px" width="16" height="15" viewBox="0 0 16 15"><path d="M0.500 1.500h6l1 1.500h8v10.500h-15z" fill="#6fc0e0"/><rect x="0.500" y="4" width="15" height="9.500" fill="url(#fg)"/><rect x="1.500" y="12.500" width="14" height="1.200" fill="#0c2a3f"/></svg>
<div class="tr" style="left:62.5px;top:110.5px;letter-spacing:-0.17px;">Konfigurácia a správa systému</div>
<div class="abs" style="left:36px;top:137.5px;width:6px;height:0;border-top:1px dotted #8a8a8a"></div>
<svg class="abs" style="left:26.5px;top:133.0px" width="9" height="9"><rect x="0.500" y="0.500" width="8" height="8" rx="1" fill="#fdfdfd" stroke="#8f8f8f"/><path d="M2.500 4.500h4" stroke="#555" stroke-width="1"/></svg>
<svg class="abs" style="left:41.5px;top:129.0px" width="16" height="15" viewBox="0 0 16 15"><path d="M0.500 1.500h6l1 1.500h8v10.500h-15z" fill="#6fc0e0"/><rect x="0.500" y="4" width="15" height="9.500" fill="url(#fg)"/><rect x="1.500" y="12.500" width="14" height="1.200" fill="#0c2a3f"/></svg>
<div class="tr" style="left:62.5px;top:128.5px;letter-spacing:0.26px;">APLIKÁCIE</div>
<div class="abs" style="left:55px;top:155.5px;width:6px;height:0;border-top:1px dotted #8a8a8a"></div>
<svg class="abs" style="left:45.5px;top:151.0px" width="9" height="9"><rect x="0.500" y="0.500" width="8" height="8" rx="1" fill="#fdfdfd" stroke="#8f8f8f"/><path d="M2.500 4.500h4M4.500 2.500v4" stroke="#2d3f9a" stroke-width="1"/></svg>
<svg class="abs" style="left:60.5px;top:147.0px" width="16" height="15" viewBox="0 0 16 15"><path d="M0.500 1.500h6l1 1.500h8v10.500h-15z" fill="#6fc0e0"/><rect x="0.500" y="4" width="15" height="9.500" fill="url(#fg)"/><rect x="1.500" y="12.500" width="14" height="1.200" fill="#0c2a3f"/></svg>
<div class="tr" style="left:81.5px;top:146.5px;letter-spacing:0.01px;">Manažérske prehľady (BI)</div>
<div class="abs" style="left:55px;top:173.5px;width:6px;height:0;border-top:1px dotted #8a8a8a"></div>
<svg class="abs" style="left:45.5px;top:169.0px" width="9" height="9"><rect x="0.500" y="0.500" width="8" height="8" rx="1" fill="#fdfdfd" stroke="#8f8f8f"/><path d="M2.500 4.500h4" stroke="#555" stroke-width="1"/></svg>
<svg class="abs" style="left:60.5px;top:165.0px" width="16" height="15" viewBox="0 0 16 15"><path d="M0.500 1.500h6l1 1.500h8v10.500h-15z" fill="#6fc0e0"/><rect x="0.500" y="4" width="15" height="9.500" fill="url(#fg)"/><rect x="1.500" y="12.500" width="14" height="1.200" fill="#0c2a3f"/></svg>
<div class="tr" style="left:81.5px;top:164.5px;letter-spacing:-0.23px;">Financie</div>
<div class="abs" style="left:74px;top:191.5px;width:6px;height:0;border-top:1px dotted #8a8a8a"></div>
<svg class="abs" style="left:64.5px;top:187.0px" width="9" height="9"><rect x="0.500" y="0.500" width="8" height="8" rx="1" fill="#fdfdfd" stroke="#8f8f8f"/><path d="M2.500 4.500h4M4.500 2.500v4" stroke="#2d3f9a" stroke-width="1"/></svg>
<svg class="abs" style="left:79.5px;top:183.0px" width="16" height="15" viewBox="0 0 16 15"><path d="M0.500 1.500h6l1 1.500h8v10.500h-15z" fill="#6fc0e0"/><rect x="0.500" y="4" width="15" height="9.500" fill="url(#fg)"/><rect x="1.500" y="12.500" width="14" height="1.200" fill="#0c2a3f"/></svg>
<div class="tr" style="left:100.5px;top:182.5px;letter-spacing:-0.14px;">Číselníky - Financie</div>
<div class="abs" style="left:74px;top:209.5px;width:6px;height:0;border-top:1px dotted #8a8a8a"></div>
<svg class="abs" style="left:64.5px;top:205.0px" width="9" height="9"><rect x="0.500" y="0.500" width="8" height="8" rx="1" fill="#fdfdfd" stroke="#8f8f8f"/><path d="M2.500 4.500h4M4.500 2.500v4" stroke="#2d3f9a" stroke-width="1"/></svg>
<svg class="abs" style="left:79.5px;top:201.0px" width="16" height="15" viewBox="0 0 16 15"><path d="M0.500 1.500h6l1 1.500h8v10.500h-15z" fill="#6fc0e0"/><rect x="0.500" y="4" width="15" height="9.500" fill="url(#fg)"/><rect x="1.500" y="12.500" width="14" height="1.200" fill="#0c2a3f"/></svg>
<div class="tr" style="left:100.5px;top:200.5px;letter-spacing:-0.14px;">Pohľadávky</div>
<div class="abs" style="left:74px;top:227.5px;width:6px;height:0;border-top:1px dotted #8a8a8a"></div>
<svg class="abs" style="left:64.5px;top:223.0px" width="9" height="9"><rect x="0.500" y="0.500" width="8" height="8" rx="1" fill="#fdfdfd" stroke="#8f8f8f"/><path d="M2.500 4.500h4" stroke="#555" stroke-width="1"/></svg>
<svg class="abs" style="left:79.5px;top:219.0px" width="16" height="15" viewBox="0 0 16 15"><path d="M0.500 1.500h6l1 1.500h8v10.500h-15z" fill="#6fc0e0"/><rect x="0.500" y="4" width="15" height="9.500" fill="url(#fg)"/><rect x="1.500" y="12.500" width="14" height="1.200" fill="#0c2a3f"/></svg>
<div class="tr" style="left:100.5px;top:218.5px;letter-spacing:-0.30px;">Záväzky</div>
<div class="abs" style="left:93px;top:245.5px;width:6px;height:0;border-top:1px dotted #8a8a8a"></div>
<svg class="abs" style="left:83.5px;top:241.0px" width="9" height="9"><rect x="0.500" y="0.500" width="8" height="8" rx="1" fill="#fdfdfd" stroke="#8f8f8f"/><path d="M2.500 4.500h4M4.500 2.500v4" stroke="#2d3f9a" stroke-width="1"/></svg>
<svg class="abs" style="left:98.5px;top:237.0px" width="16" height="15" viewBox="0 0 16 15"><path d="M0.500 1.500h6l1 1.500h8v10.500h-15z" fill="#6fc0e0"/><rect x="0.500" y="4" width="15" height="9.500" fill="url(#fg)"/><rect x="1.500" y="12.500" width="14" height="1.200" fill="#0c2a3f"/></svg>
<div class="tr" style="left:119.5px;top:236.5px;letter-spacing:-0.12px;">Faktúry prijaté</div>
<div class="abs" style="left:93px;top:263.5px;width:6px;height:0;border-top:1px dotted #8a8a8a"></div>
<svg class="abs" style="left:83.5px;top:259.0px" width="9" height="9"><rect x="0.500" y="0.500" width="8" height="8" rx="1" fill="#fdfdfd" stroke="#8f8f8f"/><path d="M2.500 4.500h4M4.500 2.500v4" stroke="#2d3f9a" stroke-width="1"/></svg>
<svg class="abs" style="left:98.5px;top:255.0px" width="16" height="15" viewBox="0 0 16 15"><path d="M0.500 1.500h6l1 1.500h8v10.500h-15z" fill="#6fc0e0"/><rect x="0.500" y="4" width="15" height="9.500" fill="url(#fg)"/><rect x="1.500" y="12.500" width="14" height="1.200" fill="#0c2a3f"/></svg>
<div class="tr" style="left:119.5px;top:254.5px;letter-spacing:0.09px;">Dovozové JCD</div>
<div class="abs" style="left:93px;top:281.5px;width:6px;height:0;border-top:1px dotted #8a8a8a"></div>
<svg class="abs" style="left:83.5px;top:277.0px" width="9" height="9"><rect x="0.500" y="0.500" width="8" height="8" rx="1" fill="#fdfdfd" stroke="#8f8f8f"/><path d="M2.500 4.500h4M4.500 2.500v4" stroke="#2d3f9a" stroke-width="1"/></svg>
<svg class="abs" style="left:98.5px;top:273.0px" width="16" height="15" viewBox="0 0 16 15"><path d="M0.500 1.500h6l1 1.500h8v10.500h-15z" fill="#6fc0e0"/><rect x="0.500" y="4" width="15" height="9.500" fill="url(#fg)"/><rect x="1.500" y="12.500" width="14" height="1.200" fill="#0c2a3f"/></svg>
<div class="tr" style="left:119.5px;top:272.5px;letter-spacing:-0.25px;">Dobropisy vydané</div>
<div class="abs" style="left:93px;top:299.5px;width:6px;height:0;border-top:1px dotted #8a8a8a"></div>
<svg class="abs" style="left:83.5px;top:295.0px" width="9" height="9"><rect x="0.500" y="0.500" width="8" height="8" rx="1" fill="#fdfdfd" stroke="#8f8f8f"/><path d="M2.500 4.500h4M4.500 2.500v4" stroke="#2d3f9a" stroke-width="1"/></svg>
<svg class="abs" style="left:98.5px;top:291.0px" width="16" height="15" viewBox="0 0 16 15"><path d="M0.500 1.500h6l1 1.500h8v10.500h-15z" fill="#6fc0e0"/><rect x="0.500" y="4" width="15" height="9.500" fill="url(#fg)"/><rect x="1.500" y="12.500" width="14" height="1.200" fill="#0c2a3f"/></svg>
<div class="tr" style="left:119.5px;top:290.5px;letter-spacing:-0.20px;">Zálohové listy prijaté</div>
<div class="abs" style="left:93px;top:317.5px;width:6px;height:0;border-top:1px dotted #8a8a8a"></div>
<svg class="abs" style="left:83.5px;top:313.0px" width="9" height="9"><rect x="0.500" y="0.500" width="8" height="8" rx="1" fill="#fdfdfd" stroke="#8f8f8f"/><path d="M2.500 4.500h4M4.500 2.500v4" stroke="#2d3f9a" stroke-width="1"/></svg>
<svg class="abs" style="left:98.5px;top:309.0px" width="16" height="15" viewBox="0 0 16 15"><path d="M0.500 1.500h6l1 1.500h8v10.500h-15z" fill="#6fc0e0"/><rect x="0.500" y="4" width="15" height="9.500" fill="url(#fg)"/><rect x="1.500" y="12.500" width="14" height="1.200" fill="#0c2a3f"/></svg>
<div class="tr" style="left:119.5px;top:308.5px;letter-spacing:-0.21px;">Ostatné záväzky</div>
<div class="abs" style="left:93px;top:335.5px;width:6px;height:0;border-top:1px dotted #8a8a8a"></div>
<svg class="abs" style="left:83.5px;top:331.0px" width="9" height="9"><rect x="0.500" y="0.500" width="8" height="8" rx="1" fill="#fdfdfd" stroke="#8f8f8f"/><path d="M2.500 4.500h4M4.500 2.500v4" stroke="#2d3f9a" stroke-width="1"/></svg>
<svg class="abs" style="left:98.5px;top:327.0px" width="16" height="15" viewBox="0 0 16 15"><path d="M0.500 1.500h6l1 1.500h8v10.500h-15z" fill="#6fc0e0"/><rect x="0.500" y="4" width="15" height="9.500" fill="url(#fg)"/><rect x="1.500" y="12.500" width="14" height="1.200" fill="#0c2a3f"/></svg>
<div class="tr" style="left:119.5px;top:326.5px;letter-spacing:-0.16px;">Staré záväzky</div>
<div class="abs" style="left:89px;top:353.5px;width:8px;height:0;border-top:1px dotted #8a8a8a"></div>
<svg class="abs" style="left:103.5px;top:347.0px" width="8" height="13"><polygon points="0.500,0.500 7.500,6.500 0.500,12.500" fill="#1f618f"/></svg>
<div class="tr" style="left:119.5px;top:344.5px;letter-spacing:-0.07px;">Kniha záväzkov</div>
<div class="abs" style="left:89px;top:371.5px;width:8px;height:0;border-top:1px dotted #8a8a8a"></div>
<svg class="abs" style="left:103.5px;top:365.0px" width="8" height="13"><polygon points="0.500,0.500 7.500,6.500 0.500,12.500" fill="#1f618f"/></svg>
<div class="tr" style="left:119.5px;top:362.5px;letter-spacing:-0.21px;">Záväzky na schválenie</div>
<div class="abs" style="left:89px;top:389.5px;width:8px;height:0;border-top:1px dotted #8a8a8a"></div>
<svg class="abs" style="left:103.5px;top:383.0px" width="8" height="13"><polygon points="0.500,0.500 7.500,6.500 0.500,12.500" fill="#1f618f"/></svg>
<div class="tr" style="left:119.5px;top:380.5px;letter-spacing:-0.16px;">Neuhradené záväzky</div>
<div class="abs" style="left:89px;top:407.5px;width:8px;height:0;border-top:1px dotted #8a8a8a"></div>
<svg class="abs" style="left:103.5px;top:401.0px" width="8" height="13"><polygon points="0.500,0.500 7.500,6.500 0.500,12.500" fill="#1f618f"/></svg>
<div class="tr" style="left:119.5px;top:398.5px;letter-spacing:-0.19px;">Uhradené záväzky</div>
<div class="abs" style="left:89px;top:425.5px;width:8px;height:0;border-top:1px dotted #8a8a8a"></div>
<svg class="abs" style="left:103.5px;top:419.0px" width="8" height="13"><polygon points="0.500,0.500 7.500,6.500 0.500,12.500" fill="#1f618f"/></svg>
<div class="tr" style="left:119.5px;top:416.5px;letter-spacing:-0.18px;">Preplatené záväzky</div>
<div class="abs" style="left:89px;top:443.5px;width:8px;height:0;border-top:1px dotted #8a8a8a"></div>
<svg class="abs" style="left:103.5px;top:437.0px" width="8" height="13"><polygon points="0.500,0.500 7.500,6.500 0.500,12.500" fill="#1f618f"/></svg>
<div class="tr" style="left:119.5px;top:434.5px;letter-spacing:-0.09px;">Kniha záväzkov ku dňu</div>
<div class="abs" style="left:89px;top:461.5px;width:8px;height:0;border-top:1px dotted #8a8a8a"></div>
<svg class="abs" style="left:103.5px;top:455.0px" width="8" height="13"><polygon points="0.500,0.500 7.500,6.500 0.500,12.500" fill="#1f618f"/></svg>
<div class="tr" style="left:119.5px;top:452.5px;letter-spacing:-0.08px;">Časová štruktúra záväzkov</div>
<div class="abs" style="left:89px;top:479.5px;width:8px;height:0;border-top:1px dotted #8a8a8a"></div>
<svg class="abs" style="left:103.5px;top:473.0px" width="8" height="13"><polygon points="0.500,0.500 7.500,6.500 0.500,12.500" fill="#1f618f"/></svg>
<div class="tr" style="left:119.5px;top:470.5px;letter-spacing:-0.13px;">Kontrola platieb záväzkov</div>
<div class="abs" style="left:89px;top:497.5px;width:8px;height:0;border-top:1px dotted #8a8a8a"></div>
<svg class="abs" style="left:103.5px;top:491.0px" width="8" height="13"><polygon points="0.500,0.500 7.500,6.500 0.500,12.500" fill="#1f618f"/></svg>
<div class="tr" style="left:119.5px;top:488.5px;letter-spacing:-0.17px;">Platby záväzkov</div>
<div class="abs" style="left:89px;top:515.5px;width:8px;height:0;border-top:1px dotted #8a8a8a"></div>
<svg class="abs" style="left:103.5px;top:509.0px" width="8" height="13"><polygon points="0.500,0.500 7.500,6.500 0.500,12.500" fill="#1f618f"/></svg>
<div class="tr" style="left:119.5px;top:506.5px;letter-spacing:-0.07px;">Kniha záväzkov - účtovná</div>
<div class="abs" style="left:89px;top:533.5px;width:8px;height:0;border-top:1px dotted #8a8a8a"></div>
<svg class="abs" style="left:103.5px;top:527.0px" width="8" height="13"><polygon points="0.500,0.500 7.500,6.500 0.500,12.500" fill="#1f618f"/></svg>
<div class="tr" style="left:119.5px;top:524.5px;letter-spacing:-0.08px;">Časová štruktúra záväzkov - účtovná</div>
<div class="abs" style="left:89px;top:551.5px;width:8px;height:0;border-top:1px dotted #8a8a8a"></div>
<svg class="abs" style="left:103.5px;top:545.0px" width="8" height="13"><polygon points="0.500,0.500 7.500,6.500 0.500,12.500" fill="#1f618f"/></svg>
<div class="tr" style="left:119.5px;top:542.5px;letter-spacing:-0.17px;">Karty majetku s pripojenými daňovými dokladmi</div>
<div class="abs" style="left:74px;top:569.5px;width:6px;height:0;border-top:1px dotted #8a8a8a"></div>
<svg class="abs" style="left:64.5px;top:565.0px" width="9" height="9"><rect x="0.500" y="0.500" width="8" height="8" rx="1" fill="#fdfdfd" stroke="#8f8f8f"/><path d="M2.500 4.500h4" stroke="#555" stroke-width="1"/></svg>
<svg class="abs" style="left:79.5px;top:561.0px" width="16" height="15" viewBox="0 0 16 15"><path d="M0.500 1.500h6l1 1.500h8v10.500h-15z" fill="#6fc0e0"/><rect x="0.500" y="4" width="15" height="9.500" fill="url(#fg)"/><rect x="1.500" y="12.500" width="14" height="1.200" fill="#0c2a3f"/></svg>
<div class="tr" style="left:100.5px;top:560.5px;letter-spacing:-0.40px;">Platby</div>
<div class="abs" style="left:93px;top:587.5px;width:6px;height:0;border-top:1px dotted #8a8a8a"></div>
<svg class="abs" style="left:83.5px;top:583.0px" width="9" height="9"><rect x="0.500" y="0.500" width="8" height="8" rx="1" fill="#fdfdfd" stroke="#8f8f8f"/><path d="M2.500 4.500h4" stroke="#555" stroke-width="1"/></svg>
<svg class="abs" style="left:98.5px;top:579.0px" width="16" height="15" viewBox="0 0 16 15"><path d="M0.500 1.500h6l1 1.500h8v10.500h-15z" fill="#6fc0e0"/><rect x="0.500" y="4" width="15" height="9.500" fill="url(#fg)"/><rect x="1.500" y="12.500" width="14" height="1.200" fill="#0c2a3f"/></svg>
<div class="tr" style="left:119.5px;top:578.5px;letter-spacing:-0.23px;">Bankové účty</div>
<div class="abs" style="left:108px;top:605.5px;width:8px;height:0;border-top:1px dotted #8a8a8a"></div>
<svg class="abs" style="left:122.5px;top:599.0px" width="8" height="13"><polygon points="0.500,0.500 7.500,6.500 0.500,12.500" fill="#1f618f"/></svg>
<div class="tr" style="left:138.5px;top:596.5px;letter-spacing:-0.16px;">Bankové účty vlastnej organizácie</div>
<div class="abs" style="left:108px;top:623.5px;width:8px;height:0;border-top:1px dotted #8a8a8a"></div>
<svg class="abs" style="left:122.5px;top:617.0px" width="8" height="13"><polygon points="0.500,0.500 7.500,6.500 0.500,12.500" fill="#1f618f"/></svg>
<div class="tr" style="left:138.5px;top:614.5px;letter-spacing:-0.24px;">Kontrola súhrnných platieb</div>
<div class="abs" style="left:108px;top:641.5px;width:8px;height:0;border-top:1px dotted #8a8a8a"></div>
<svg class="abs" style="left:122.5px;top:635.0px" width="8" height="13"><polygon points="0.500,0.500 7.500,6.500 0.500,12.500" fill="#1f618f"/></svg>
<div class="tr" style="left:138.5px;top:632.5px;letter-spacing:-0.21px;">Položky všetkých bankových výpisov</div>
<div class="abs" style="left:108px;top:659.5px;width:8px;height:0;border-top:1px dotted #8a8a8a"></div>
<svg class="abs" style="left:122.5px;top:653.0px" width="8" height="13"><polygon points="0.500,0.500 7.500,6.500 0.500,12.500" fill="#1f618f"/></svg>
<div class="tr" style="left:138.5px;top:650.5px;letter-spacing:-0.18px;">Všetky nepreplatené položky príkazov</div>
<div class="abs" style="left:108px;top:677.5px;width:8px;height:0;border-top:1px dotted #8a8a8a"></div>
<svg class="abs" style="left:122.5px;top:671.0px" width="8" height="13"><polygon points="0.500,0.500 7.500,6.500 0.500,12.500" fill="#1f618f"/></svg>
<div class="tr" style="left:138.5px;top:668.5px;letter-spacing:-0.18px;">Vyradené položky príkazu na úhradu</div>
<div class="abs" style="left:93px;top:695.5px;width:6px;height:0;border-top:1px dotted #8a8a8a"></div>
<svg class="abs" style="left:83.5px;top:691.0px" width="9" height="9"><rect x="0.500" y="0.500" width="8" height="8" rx="1" fill="#fdfdfd" stroke="#8f8f8f"/><path d="M2.500 4.500h4" stroke="#555" stroke-width="1"/></svg>
<svg class="abs" style="left:98.5px;top:687.0px" width="16" height="15" viewBox="0 0 16 15"><path d="M0.500 1.500h6l1 1.500h8v10.500h-15z" fill="#6fc0e0"/><rect x="0.500" y="4" width="15" height="9.500" fill="url(#fg)"/><rect x="1.500" y="12.500" width="14" height="1.200" fill="#0c2a3f"/></svg>
<div class="tr" style="left:119.5px;top:686.5px;letter-spacing:-0.18px;">Pokladne</div>
<div class="abs" style="left:108px;top:713.5px;width:8px;height:0;border-top:1px dotted #8a8a8a"></div>
<svg class="abs" style="left:122.5px;top:707.0px" width="8" height="13"><polygon points="0.500,0.500 7.500,6.500 0.500,12.500" fill="#1f618f"/></svg>
<div class="tr" style="left:138.5px;top:704.5px;letter-spacing:-0.18px;">Pokladne</div>
<div class="abs" style="left:108px;top:731.5px;width:8px;height:0;border-top:1px dotted #8a8a8a"></div>
<svg class="abs" style="left:122.5px;top:725.0px" width="8" height="13"><polygon points="0.500,0.500 7.500,6.500 0.500,12.500" fill="#1f618f"/></svg>
<div class="tr" style="left:138.5px;top:722.5px;letter-spacing:-0.24px;">Zoznam nepripojených vyúčtovaní záloh</div>
<div class="abs" style="left:108px;top:749.5px;width:8px;height:0;border-top:1px dotted #8a8a8a"></div>
<svg class="abs" style="left:122.5px;top:743.0px" width="8" height="13"><polygon points="0.500,0.500 7.500,6.500 0.500,12.500" fill="#1f618f"/></svg>
<div class="tr" style="left:138.5px;top:740.5px;letter-spacing:-0.25px;">Peňažný denník</div>
<div class="abs" style="left:108px;top:767.5px;width:8px;height:0;border-top:1px dotted #8a8a8a"></div>
<svg class="abs" style="left:122.5px;top:761.0px" width="8" height="13"><polygon points="0.500,0.500 7.500,6.500 0.500,12.500" fill="#1f618f"/></svg>
<div class="tr" style="left:138.5px;top:758.5px;letter-spacing:-0.13px;">Evidované tržby EET - pokladničné príjemky</div>
<div class="abs" style="left:108px;top:785.5px;width:8px;height:0;border-top:1px dotted #8a8a8a"></div>
<svg class="abs" style="left:122.5px;top:779.0px" width="8" height="13"><polygon points="0.500,0.500 7.500,6.500 0.500,12.500" fill="#1f618f"/></svg>
<div class="tr" style="left:138.5px;top:776.5px;letter-spacing:-0.22px;">Podklady pre oznámenie platieb fyzickým osobám</div>
<div class="abs" style="left:108px;top:803.5px;width:8px;height:0;border-top:1px dotted #8a8a8a"></div>
<svg class="abs" style="left:122.5px;top:797.0px" width="8" height="13"><polygon points="0.500,0.500 7.500,6.500 0.500,12.500" fill="#1f618f"/></svg>
<div class="tr" style="left:138.5px;top:794.5px;letter-spacing:-0.12px;">Evidované tržby EET - pokladničná výdajka</div>
<div class="abs" style="left:93px;top:821.5px;width:6px;height:0;border-top:1px dotted #8a8a8a"></div>
<svg class="abs" style="left:83.5px;top:817.0px" width="9" height="9"><rect x="0.500" y="0.500" width="8" height="8" rx="1" fill="#fdfdfd" stroke="#8f8f8f"/><path d="M2.500 4.500h4M4.500 2.500v4" stroke="#2d3f9a" stroke-width="1"/></svg>
<svg class="abs" style="left:98.5px;top:813.0px" width="16" height="15" viewBox="0 0 16 15"><path d="M0.500 1.500h6l1 1.500h8v10.500h-15z" fill="#6fc0e0"/><rect x="0.500" y="4" width="15" height="9.500" fill="url(#fg)"/><rect x="1.500" y="12.500" width="14" height="1.200" fill="#0c2a3f"/></svg>
<div class="tr" style="left:119.5px;top:812.5px;letter-spacing:-0.53px;">Zápočty</div>
<div class="abs" style="left:89px;top:839.5px;width:8px;height:0;border-top:1px dotted #8a8a8a"></div>
<svg class="abs" style="left:103.5px;top:833.0px" width="8" height="13"><polygon points="0.500,0.500 7.500,6.500 0.500,12.500" fill="#1f618f"/></svg>
<div class="tr" style="left:119.5px;top:830.5px;letter-spacing:-0.18px;">Zoznam kurzových rozdielov k platbám</div>
<div class="abs" style="left:74px;top:857.5px;width:6px;height:0;border-top:1px dotted #8a8a8a"></div>
<svg class="abs" style="left:64.5px;top:853.0px" width="9" height="9"><rect x="0.500" y="0.500" width="8" height="8" rx="1" fill="#fdfdfd" stroke="#8f8f8f"/><path d="M2.500 4.500h4M4.500 2.500v4" stroke="#2d3f9a" stroke-width="1"/></svg>
<svg class="abs" style="left:79.5px;top:849.0px" width="16" height="15" viewBox="0 0 16 15"><path d="M0.500 1.500h6l1 1.500h8v10.500h-15z" fill="#6fc0e0"/><rect x="0.500" y="4" width="15" height="9.500" fill="url(#fg)"/><rect x="1.500" y="12.500" width="14" height="1.200" fill="#0c2a3f"/></svg>
<div class="tr" style="left:100.5px;top:848.5px;letter-spacing:0.05px;">DPH</div>
</div>
<div class="sb" style="left:415px;top:48px;width:17px;height:868px"></div>
<div class="th" style="left:415px;top:66px;width:17px;height:478px"></div>
<div class="abs" style="left:415px;top:48px;width:17px;height:18px;background:#fafcff"></div>
<svg class="abs" style="left:418.5px;top:53px" width="10" height="8" viewBox="0 0 10 8"><path d="M1.600 6.200l3.400-3.400 3.400 3.400" fill="none" stroke="#0c1320" stroke-width="2.300"/></svg>
<div class="abs" style="left:415px;top:899px;width:17px;height:17px;background:#fafcff"></div>
<svg class="abs" style="left:418.5px;top:902px" width="10" height="8" viewBox="0 0 10 8"><path d="M1.600 1.800l3.400 3.400 3.400-3.400" fill="none" stroke="#0c1320" stroke-width="2.300"/></svg>
<div class="sb" style="left:28px;top:916px;width:404px;height:17px;background:#fafcff"></div>
<div class="th" style="left:46px;top:916px;width:322px;height:17px"></div>
<div class="abs" style="left:368px;top:916px;width:30px;height:17px;background:#f1f5fa"></div>
<svg class="abs" style="left:33.5px;top:919px" width="8" height="10" viewBox="0 0 8 10"><path d="M5.700 1.600l-3.400 3.400 3.400 3.400" fill="none" stroke="#0c1320" stroke-width="2.300"/></svg>
<svg class="abs" style="left:402.5px;top:919px" width="8" height="10" viewBox="0 0 8 10"><path d="M2.300 1.600l3.400 3.400-3.400 3.400" fill="none" stroke="#0c1320" stroke-width="2.300"/></svg>
</div>
<div id="desk">
<svg class="abs" style="left:0;top:0" width="1240" height="938" viewBox="438 72 1240 938"><defs><pattern id="sq" x="1501" y="71.800" width="8.550" height="8.750" patternUnits="userSpaceOnUse"><rect x="0" y="0" width="8.550" height="8.750" fill="#fff"/><rect x="0" y="0" width="7.100" height="7.250" fill="#004a96"/></pattern></defs><rect x="438" y="72" width="1240" height="938" fill="#004a96"/><rect x="545.80" y="72" width="1.250" height="938" fill="#fff" opacity=".88"/><rect x="682.05" y="72" width="1.250" height="938" fill="#fff" opacity=".88"/><rect x="818.30" y="72" width="1.250" height="938" fill="#fff" opacity=".88"/><rect x="954.55" y="72" width="1.250" height="938" fill="#fff" opacity=".88"/><rect x="1090.80" y="72" width="1.250" height="938" fill="#fff" opacity=".88"/><rect x="1227.05" y="72" width="1.250" height="938" fill="#fff" opacity=".88"/><rect x="1363.30" y="72" width="1.250" height="938" fill="#fff" opacity=".88"/><rect x="438" y="210.00" width="1240" height="1.450" fill="#fff"/><rect x="438" y="350.00" width="1240" height="1.450" fill="#fff"/><rect x="438" y="490.00" width="1240" height="1.450" fill="#fff"/><rect x="438" y="630.00" width="1240" height="1.450" fill="#fff"/><rect x="438" y="770.00" width="1240" height="1.450" fill="#fff"/><rect x="438" y="910.00" width="1240" height="1.450" fill="#fff"/><ellipse cx="1431.600" cy="141.500" rx="68.500" ry="69.600" fill="#fff"/><ellipse cx="1432.100" cy="141.250" rx="36.200" ry="36.450" fill="#004a96"/><rect x="1395" y="141" width="74" height="1.300" fill="#fff"/><rect x="1431.900" y="104" width="1.300" height="75" fill="#fff"/><polygon points="1455.600,143.100 1499.500,186.700 1476.200,211.200 1432.600,166.100" fill="#fff"/><rect x="1499.500" y="72" width="43.800" height="938" fill="#fff"/><rect x="1501" y="72" width="6.900" height="139" fill="#004a96"/><rect x="1509.200" y="107.100" width="32.700" height="7.500" fill="#004a96"/><rect x="1501" y="211.500" width="40.900" height="800" fill="#004a96"/><rect x="1507.9" y="72" width="1.30" height="938" fill="#fff"/><rect x="1516.8" y="72" width="1.30" height="938" fill="#fff"/><rect x="1524.8" y="72" width="1.90" height="938" fill="#fff"/><rect x="1533.8" y="72" width="1.40" height="938" fill="#fff"/><path d="M1501 80.20h41M1501 88.94h41M1501 97.68h41M1501 106.41h41M1501 115.15h41M1501 123.89h41M1501 132.62h41M1501 141.36h41M1501 150.10h41M1501 158.84h41M1501 167.57h41M1501 176.31h41M1501 185.05h41M1501 193.79h41M1501 202.53h41M1501 211.26h41M1501 220.00h41M1501 228.74h41M1501 237.48h41M1501 246.21h41M1501 254.95h41M1501 263.69h41M1501 272.43h41M1501 281.16h41M1501 289.90h41M1501 298.64h41M1501 307.38h41M1501 316.11h41M1501 324.85h41M1501 333.59h41M1501 342.32h41M1501 351.06h41M1501 359.80h41M1501 368.54h41M1501 377.28h41M1501 386.01h41M1501 394.75h41M1501 403.49h41M1501 412.23h41M1501 420.96h41M1501 429.70h41M1501 438.44h41M1501 447.18h41M1501 455.91h41M1501 464.65h41M1501 473.39h41M1501 482.12h41M1501 490.86h41M1501 499.60h41M1501 508.34h41M1501 517.08h41M1501 525.81h41M1501 534.55h41M1501 543.29h41M1501 552.03h41M1501 560.76h41M1501 569.50h41M1501 578.24h41M1501 586.98h41M1501 595.71h41M1501 604.45h41M1501 613.19h41M1501 621.93h41M1501 630.66h41M1501 639.40h41M1501 648.14h41M1501 656.88h41M1501 665.61h41M1501 674.35h41M1501 683.09h41M1501 691.83h41M1501 700.56h41M1501 709.30h41M1501 718.04h41M1501 726.78h41M1501 735.51h41M1501 744.25h41M1501 752.99h41M1501 761.73h41M1501 770.46h41M1501 779.20h41M1501 787.94h41M1501 796.68h41M1501 805.41h41M1501 814.15h41M1501 822.89h41M1501 831.63h41M1501 840.36h41M1501 849.10h41M1501 857.84h41M1501 866.58h41M1501 875.31h41M1501 884.05h41M1501 892.79h41M1501 901.53h41M1501 910.26h41M1501 919.00h41M1501 927.74h41M1501 936.48h41M1501 945.21h41M1501 953.95h41M1501 962.69h41M1501 971.43h41M1501 980.16h41M1501 988.90h41M1501 997.64h41M1501 1006.38h41" stroke="#fff" stroke-width="1.450" fill="none"/><rect x="1499.500" y="210" width="43.800" height="1.600" fill="#fff"/><text x="1550.500" y="96.5" font-family="Liberation Sans,sans-serif" font-size="20.200" textLength="120.4" lengthAdjust="spacingAndGlyphs" fill="#fff" stroke="#fff" stroke-width=".900" stroke-linejoin="round">CENTRÁLNY</text><text x="1550.500" y="118.6" font-family="Liberation Sans,sans-serif" font-size="20.200" textLength="82.4" lengthAdjust="spacingAndGlyphs" fill="#fff" stroke="#fff" stroke-width=".900" stroke-linejoin="round">MOZOG</text><text x="1550.500" y="140.7" font-family="Liberation Sans,sans-serif" font-size="20.200" textLength="62.6" lengthAdjust="spacingAndGlyphs" fill="#fff" stroke="#fff" stroke-width=".900" stroke-linejoin="round">FIRMY</text></svg>
<svg class="abs" style="left:20px;top:680px" width="60" height="62" viewBox="458 752 60 62"><defs><linearGradient id="eg" x1="0" y1="0" x2="0" y2="1"><stop offset="0" stop-color="#3fae55"/><stop offset="1" stop-color="#6fcf6a"/></linearGradient></defs><path d="M511.060 764.440A22 22 0 1 0 512.350 794.140" fill="none" stroke="url(#eg)" stroke-width="8.600"/><path d="M477 762a25 25 0 0 1 22-7" fill="none" stroke="#e6f7e6" stroke-width="1.300"/><ellipse cx="495" cy="810" rx="17" ry="3" fill="#5fbf60" opacity=".18"/><polygon points="467,770.500 509,770.500 506,776.500 461,776.500" fill="#a9a9a9"/><polygon points="466,782 505,782 502,789 461,789" fill="#a9a9a9"/></svg>
<div class="abs" style="left:-2px;top:750.5px;width:100px;text-align:center;color:#fff;line-height:13px;letter-spacing:-0.300px">Pokladne</div>
<svg class="abs" style="left:20px;top:790px" width="58" height="60" viewBox="458 862 58 60"><rect x="460" y="880.300" width="52.500" height="1.600" fill="#a8a8a8"/><rect x="460" y="899.300" width="52.500" height="1.600" fill="#a8a8a8"/><polygon points="468,865 473,867 467,881 463,879" fill="#f01818"/><rect x="473.500" y="865" width="5" height="15.300" fill="#d8d8d8"/><rect x="479" y="865" width="5.500" height="15.300" fill="#c0c0c0"/><rect x="492" y="875.500" width="15.500" height="4.800" fill="#d2d2d2"/><rect x="467.500" y="884" width="5" height="15.300" fill="#cfcfcf"/><rect x="473.500" y="884" width="2" height="15.300" fill="#e62020"/><rect x="476" y="884" width="3.500" height="15.300" fill="#dcdcdc"/><rect x="480.500" y="889" width="15" height="5" fill="#cdcdcd"/><rect x="480.500" y="894.500" width="15" height="4.800" fill="#8e8e8e"/><rect x="502" y="884" width="5" height="15.300" fill="#f01818"/><rect x="464.500" y="902" width="5" height="15.500" fill="#cfcfcf"/><rect x="470" y="902" width="5" height="15.500" fill="#8f8f8f"/><rect x="478.500" y="902" width="5" height="15.500" fill="#d6d6d6"/><polygon points="494,902 499,904.500 492.500,918 488,915.500" fill="#f01818"/><rect x="499.500" y="902" width="5" height="15.500" fill="#d2d2d2"/><rect x="505" y="902" width="5" height="15.500" fill="#bcbcbc"/></svg>
<div class="abs" style="left:-12.5px;top:864px;width:120px;text-align:center;color:#fff;line-height:12.700px;letter-spacing:-0.300px">Zoznam všetkých<br>vydaných faktúr</div>
<div class="win" style="left:20px;top:19px;width:900px;height:440px">
<div class="wt">
<svg style="left:7px;top:6px" width="15" height="17"><polygon points="0.500,0.300 14.300,8.300 0.500,16.300" fill="#fdfdfd"/><path d="M3.800 12.300l7.200-4" stroke="#b5b5b5" stroke-width="1.500"/><path d="M1.200 1.500l0.300 2.500" stroke="#cccccc" stroke-width="1"/></svg>
<span class="t">Záväzky na schválenie (SK)</span>
<span class="n" style="left:786px;">24</span>
<svg style="left:824px;top:5px" width="70" height="18" fill="none" stroke="#111"><path d="M3 9.500h10" stroke-width="1.5"/><rect x="28.500" y="5.500" width="9.500" height="9.500" stroke-width="1.5"/><path d="M53.500 5l9 9.500M62.500 5l-9 9.500" stroke-width="2.3"/></svg>
</div>
<div class="grid" style="left:13px;top:37px;width:734px;height:340px">
<div class="gh" style="left:0.0px;width:118.5px;letter-spacing:-0.27px;">Evidenčné číslo dokladu</div>
<div class="gh" style="left:118.5px;width:87.0px;letter-spacing:-0.38px;">Variabilný symbol</div>
<div class="gh" style="left:205.5px;width:85.5px;letter-spacing:-0.24px;">Dátum splatnosti</div>
<div class="gh" style="left:291.0px;width:102.5px;letter-spacing:-0.19px;">Dlh v účtovnej mene</div>
<div class="gh" style="left:393.5px;width:92.0px;letter-spacing:-0.24px;">Dlh v cudzej mene</div>
<div class="gh" style="left:485.5px;width:30.5px;letter-spacing:-0.24px;">Mena</div>
<div class="gh" style="left:516.0px;width:147.5px;letter-spacing:-0.07px;">Dodávateľ</div>
<div class="gh" style="left:663.5px;width:51.5px;letter-spacing:-0.20px;">Dobrop...</div>
<div class="gh" style="left:715.0px;width:17.0px;border-right:none"></div>
<div class="c s" style="left:0.0px;top:18px;width:118.5px;letter-spacing:-0.14px;">FPZ-2018-2-000001</div>
<div class="c s" style="left:118.5px;top:18px;width:87.0px;letter-spacing:-0.29px;">564564</div>
<div class="c s" style="left:205.5px;top:18px;width:85.5px;letter-spacing:-0.24px;">12. 3. 2018</div>
<div class="c r s" style="left:291.0px;top:18px;width:102.5px;letter-spacing:-0.26px;">23,80</div>
<div class="c r s" style="left:393.5px;top:18px;width:92.0px;letter-spacing:-0.26px;">0,00</div>
<div class="c s" style="left:485.5px;top:18px;width:30.5px;"></div>
<div class="c s" style="left:516.0px;top:18px;width:147.5px;letter-spacing:0.04px;">FIRMA SK</div>
<div class="c s" style="left:663.5px;top:18px;width:51.5px;"></div>
<div class="c" style="left:0.0px;top:36px;width:118.5px;background:#c9dafc;letter-spacing:-0.16px;">OZ-2014-4-000001</div>
<div class="c" style="left:118.5px;top:36px;width:87.0px;background:#c9dafc;letter-spacing:-0.29px;">54664646</div>
<div class="c" style="left:205.5px;top:36px;width:85.5px;background:#c9dafc;letter-spacing:-0.24px;">20. 2. 2014</div>
<div class="c r" style="left:291.0px;top:36px;width:102.5px;background:#c9dafc;letter-spacing:-0.27px;">674,40</div>
<div class="c r" style="left:393.5px;top:36px;width:92.0px;background:#c9dafc;letter-spacing:-0.26px;">0,00</div>
<div class="c" style="left:485.5px;top:36px;width:30.5px;background:#c9dafc;"></div>
<div class="c" style="left:516.0px;top:36px;width:147.5px;background:#c9dafc;letter-spacing:0.04px;">FIRMA SK</div>
<div class="c" style="left:663.5px;top:36px;width:51.5px;background:#c9dafc;"></div>
<div class="c" style="left:0.0px;top:54px;width:118.5px;background:#dfe9fe;letter-spacing:-0.14px;">FPZ-2018-2-000003</div>
<div class="c" style="left:118.5px;top:54px;width:87.0px;background:#dfe9fe;letter-spacing:-0.29px;">564564</div>
<div class="c" style="left:205.5px;top:54px;width:85.5px;background:#dfe9fe;letter-spacing:-0.24px;">11. 7. 2018</div>
<div class="c r" style="left:291.0px;top:54px;width:102.5px;background:#dfe9fe;letter-spacing:-0.26px;">23,80</div>
<div class="c r" style="left:393.5px;top:54px;width:92.0px;background:#dfe9fe;letter-spacing:-0.26px;">0,00</div>
<div class="c" style="left:485.5px;top:54px;width:30.5px;background:#dfe9fe;"></div>
<div class="c" style="left:516.0px;top:54px;width:147.5px;background:#dfe9fe;letter-spacing:0.04px;">FIRMA SK</div>
<div class="c" style="left:663.5px;top:54px;width:51.5px;background:#dfe9fe;"></div>
<div class="c" style="left:0.0px;top:72px;width:118.5px;background:#c9dafc;letter-spacing:-0.10px;">FPT-2017-1-000009</div>
<div class="c" style="left:118.5px;top:72px;width:87.0px;background:#c9dafc;letter-spacing:-0.29px;">6790</div>
<div class="c" style="left:205.5px;top:72px;width:85.5px;background:#c9dafc;letter-spacing:-0.24px;">17. 10. 2017</div>
<div class="c r" style="left:291.0px;top:72px;width:102.5px;background:#c9dafc;letter-spacing:-0.27px;">120,00</div>
<div class="c r" style="left:393.5px;top:72px;width:92.0px;background:#c9dafc;letter-spacing:-0.26px;">0,00</div>
<div class="c" style="left:485.5px;top:72px;width:30.5px;background:#c9dafc;"></div>
<div class="c" style="left:516.0px;top:72px;width:147.5px;background:#c9dafc;letter-spacing:-0.12px;">DODAVATEL s.r.o.</div>
<div class="c" style="left:663.5px;top:72px;width:51.5px;background:#c9dafc;"></div>
<div class="c" style="left:0.0px;top:90px;width:118.5px;background:#dfe9fe;letter-spacing:-0.09px;">FPP-2015-3-000001</div>
<div class="c" style="left:118.5px;top:90px;width:87.0px;background:#dfe9fe;letter-spacing:-0.29px;">32132132</div>
<div class="c" style="left:205.5px;top:90px;width:85.5px;background:#dfe9fe;letter-spacing:-0.24px;">12. 1. 2016</div>
<div class="c r" style="left:291.0px;top:90px;width:102.5px;background:#dfe9fe;letter-spacing:-0.27px;">222,00</div>
<div class="c r" style="left:393.5px;top:90px;width:92.0px;background:#dfe9fe;letter-spacing:-0.26px;">0,00</div>
<div class="c" style="left:485.5px;top:90px;width:30.5px;background:#dfe9fe;"></div>
<div class="c" style="left:516.0px;top:90px;width:147.5px;background:#dfe9fe;letter-spacing:0.04px;">FIRMA SK</div>
<div class="c" style="left:663.5px;top:90px;width:51.5px;background:#dfe9fe;"></div>
<div class="c" style="left:0.0px;top:108px;width:118.5px;background:#c9dafc;letter-spacing:-0.19px;">ZLP-2017-5-000004</div>
<div class="c" style="left:118.5px;top:108px;width:87.0px;background:#c9dafc;letter-spacing:-0.29px;">20170001</div>
<div class="c" style="left:205.5px;top:108px;width:85.5px;background:#c9dafc;letter-spacing:-0.23px;">9. 8. 2017</div>
<div class="c r" style="left:291.0px;top:108px;width:102.5px;background:#c9dafc;letter-spacing:-0.27px;">200,00</div>
<div class="c r" style="left:393.5px;top:108px;width:92.0px;background:#c9dafc;letter-spacing:-0.26px;">0,00</div>
<div class="c" style="left:485.5px;top:108px;width:30.5px;background:#c9dafc;"></div>
<div class="c" style="left:516.0px;top:108px;width:147.5px;background:#c9dafc;letter-spacing:-0.12px;">DODAVATEL s.r.o.</div>
<div class="c" style="left:663.5px;top:108px;width:51.5px;background:#c9dafc;"></div>
<div class="c" style="left:0.0px;top:126px;width:118.5px;background:#dfe9fe;letter-spacing:-0.10px;">FPT-2017-1-000007</div>
<div class="c" style="left:118.5px;top:126px;width:87.0px;background:#dfe9fe;letter-spacing:-0.29px;">6789</div>
<div class="c" style="left:205.5px;top:126px;width:85.5px;background:#dfe9fe;letter-spacing:-0.24px;">16. 10. 2017</div>
<div class="c r" style="left:291.0px;top:126px;width:102.5px;background:#dfe9fe;letter-spacing:-0.27px;">120,00</div>
<div class="c r" style="left:393.5px;top:126px;width:92.0px;background:#dfe9fe;letter-spacing:-0.26px;">0,00</div>
<div class="c" style="left:485.5px;top:126px;width:30.5px;background:#dfe9fe;"></div>
<div class="c" style="left:516.0px;top:126px;width:147.5px;background:#dfe9fe;letter-spacing:-0.12px;">DODAVATEL s.r.o.</div>
<div class="c" style="left:663.5px;top:126px;width:51.5px;background:#dfe9fe;"></div>
<div class="c" style="left:0.0px;top:144px;width:118.5px;background:#c9dafc;letter-spacing:-0.10px;">FPT-2014-1-000005</div>
<div class="c" style="left:118.5px;top:144px;width:87.0px;background:#c9dafc;letter-spacing:-0.29px;">52632147</div>
<div class="c" style="left:205.5px;top:144px;width:85.5px;background:#c9dafc;letter-spacing:-0.23px;">3. 2. 2014</div>
<div class="c r" style="left:291.0px;top:144px;width:102.5px;background:#c9dafc;letter-spacing:-0.26px;">3 200,00</div>
<div class="c r" style="left:393.5px;top:144px;width:92.0px;background:#c9dafc;letter-spacing:-0.26px;">0,00</div>
<div class="c" style="left:485.5px;top:144px;width:30.5px;background:#c9dafc;"></div>
<div class="c" style="left:516.0px;top:144px;width:147.5px;background:#c9dafc;letter-spacing:0.04px;">FIRMA SK</div>
<div class="c" style="left:663.5px;top:144px;width:51.5px;background:#c9dafc;"></div>
<div class="c" style="left:0.0px;top:162px;width:118.5px;background:#dfe9fe;letter-spacing:-0.14px;">FPZ-2014-2-000001</div>
<div class="c" style="left:118.5px;top:162px;width:87.0px;background:#dfe9fe;letter-spacing:-0.29px;">25822</div>
<div class="c" style="left:205.5px;top:162px;width:85.5px;background:#dfe9fe;letter-spacing:-0.24px;">15. 2. 2014</div>
<div class="c r" style="left:291.0px;top:162px;width:102.5px;background:#dfe9fe;letter-spacing:-0.27px;">100,00</div>
<div class="c r" style="left:393.5px;top:162px;width:92.0px;background:#dfe9fe;letter-spacing:-0.26px;">0,00</div>
<div class="c" style="left:485.5px;top:162px;width:30.5px;background:#dfe9fe;"></div>
<div class="c" style="left:516.0px;top:162px;width:147.5px;background:#dfe9fe;letter-spacing:-0.15px;">Trust Pay, a.s.</div>
<div class="c" style="left:663.5px;top:162px;width:51.5px;background:#dfe9fe;"></div>
<div class="c" style="left:0.0px;top:180px;width:118.5px;background:#c9dafc;letter-spacing:-0.10px;">FPT-2017-1-000006</div>
<div class="c" style="left:118.5px;top:180px;width:87.0px;background:#c9dafc;letter-spacing:-0.29px;">2017002</div>
<div class="c" style="left:205.5px;top:180px;width:85.5px;background:#c9dafc;letter-spacing:-0.24px;">30. 9. 2017</div>
<div class="c r" style="left:291.0px;top:180px;width:102.5px;background:#c9dafc;letter-spacing:-0.26px;">5 200,00</div>
<div class="c r" style="left:393.5px;top:180px;width:92.0px;background:#c9dafc;letter-spacing:-0.26px;">0,00</div>
<div class="c" style="left:485.5px;top:180px;width:30.5px;background:#c9dafc;"></div>
<div class="c" style="left:516.0px;top:180px;width:147.5px;background:#c9dafc;letter-spacing:-0.12px;">DODAVATEL s.r.o.</div>
<div class="c" style="left:663.5px;top:180px;width:51.5px;background:#c9dafc;"></div>
<div class="c" style="left:0.0px;top:198px;width:118.5px;background:#dfe9fe;letter-spacing:-0.10px;">FPT-2014-1-000006</div>
<div class="c" style="left:118.5px;top:198px;width:87.0px;background:#dfe9fe;letter-spacing:-0.29px;">2154654654</div>
<div class="c" style="left:205.5px;top:198px;width:85.5px;background:#dfe9fe;letter-spacing:-0.24px;">16. 4. 2014</div>
<div class="c r" style="left:291.0px;top:198px;width:102.5px;background:#dfe9fe;letter-spacing:-0.26px;">1 500,00</div>
<div class="c r" style="left:393.5px;top:198px;width:92.0px;background:#dfe9fe;letter-spacing:-0.26px;">0,00</div>
<div class="c" style="left:485.5px;top:198px;width:30.5px;background:#dfe9fe;"></div>
<div class="c" style="left:516.0px;top:198px;width:147.5px;background:#dfe9fe;letter-spacing:0.04px;">FIRMA SK</div>
<div class="c" style="left:663.5px;top:198px;width:51.5px;background:#dfe9fe;"></div>
<div class="c" style="left:0.0px;top:216px;width:118.5px;background:#c9dafc;letter-spacing:-0.15px;">DV-2017-2-000002</div>
<div class="c" style="left:118.5px;top:216px;width:87.0px;background:#c9dafc;letter-spacing:-0.29px;">72000002</div>
<div class="c" style="left:205.5px;top:216px;width:85.5px;background:#c9dafc;letter-spacing:-0.23px;">4. 5. 2017</div>
<div class="c r" style="left:291.0px;top:216px;width:102.5px;background:#c9dafc;letter-spacing:-0.27px;">250,00</div>
<div class="c r" style="left:393.5px;top:216px;width:92.0px;background:#c9dafc;letter-spacing:-0.26px;">0,00</div>
<div class="c" style="left:485.5px;top:216px;width:30.5px;background:#c9dafc;"></div>
<div class="c" style="left:516.0px;top:216px;width:147.5px;background:#c9dafc;letter-spacing:-0.12px;">DODAVATEL s.r.o.</div>
<div class="c" style="left:663.5px;top:216px;width:51.5px;background:#c9dafc;"></div>
<div class="c" style="left:0.0px;top:234px;width:118.5px;background:#dfe9fe;letter-spacing:-0.19px;">ZLP-2018-5-000004</div>
<div class="c" style="left:118.5px;top:234px;width:87.0px;background:#dfe9fe;letter-spacing:-0.29px;">984514</div>
<div class="c" style="left:205.5px;top:234px;width:85.5px;background:#dfe9fe;letter-spacing:-0.24px;">22. 2. 2018</div>
<div class="c r" style="left:291.0px;top:234px;width:102.5px;background:#dfe9fe;letter-spacing:-0.27px;">300,00</div>
<div class="c r" style="left:393.5px;top:234px;width:92.0px;background:#dfe9fe;letter-spacing:-0.26px;">0,00</div>
<div class="c" style="left:485.5px;top:234px;width:30.5px;background:#dfe9fe;"></div>
<div class="c" style="left:516.0px;top:234px;width:147.5px;background:#dfe9fe;letter-spacing:0.04px;">FIRMA SK</div>
<div class="c" style="left:663.5px;top:234px;width:51.5px;background:#dfe9fe;"></div>
<div class="c" style="left:0.0px;top:252px;width:118.5px;background:#c9dafc;letter-spacing:-0.10px;">FPT-2016-1-000001</div>
<div class="c" style="left:118.5px;top:252px;width:87.0px;background:#c9dafc;letter-spacing:-0.29px;">65465465</div>
<div class="c" style="left:205.5px;top:252px;width:85.5px;background:#c9dafc;letter-spacing:-0.24px;">15. 2. 2016</div>
<div class="c r" style="left:291.0px;top:252px;width:102.5px;background:#c9dafc;letter-spacing:-0.26px;">1 200,00</div>
<div class="c r" style="left:393.5px;top:252px;width:92.0px;background:#c9dafc;letter-spacing:-0.26px;">0,00</div>
<div class="c" style="left:485.5px;top:252px;width:30.5px;background:#c9dafc;"></div>
<div class="c" style="left:516.0px;top:252px;width:147.5px;background:#c9dafc;letter-spacing:0.04px;">FIRMA SK</div>
<div class="c" style="left:663.5px;top:252px;width:51.5px;background:#c9dafc;"></div>
<div class="c" style="left:0.0px;top:270px;width:118.5px;background:#dfe9fe;letter-spacing:-0.10px;">FPT-2017-1-000010</div>
<div class="c" style="left:118.5px;top:270px;width:87.0px;background:#dfe9fe;letter-spacing:-0.29px;">34567890</div>
<div class="c" style="left:205.5px;top:270px;width:85.5px;background:#dfe9fe;letter-spacing:-0.24px;">17. 10. 2017</div>
<div class="c r" style="left:291.0px;top:270px;width:102.5px;background:#dfe9fe;letter-spacing:-0.26px;">48,00</div>
<div class="c r" style="left:393.5px;top:270px;width:92.0px;background:#dfe9fe;letter-spacing:-0.26px;">0,00</div>
<div class="c" style="left:485.5px;top:270px;width:30.5px;background:#dfe9fe;"></div>
<div class="c" style="left:516.0px;top:270px;width:147.5px;background:#dfe9fe;letter-spacing:-0.04px;">DCIT, s.r.o.</div>
<div class="c" style="left:663.5px;top:270px;width:51.5px;background:#dfe9fe;"></div>
<div class="c" style="left:0.0px;top:288px;width:118.5px;background:#c9dafc;letter-spacing:-0.14px;">FPZ-2018-2-000002</div>
<div class="c" style="left:118.5px;top:288px;width:87.0px;background:#c9dafc;letter-spacing:-0.29px;">564564</div>
<div class="c" style="left:205.5px;top:288px;width:85.5px;background:#c9dafc;letter-spacing:-0.23px;">3. 7. 2018</div>
<div class="c r" style="left:291.0px;top:288px;width:102.5px;background:#c9dafc;letter-spacing:-0.26px;">23,80</div>
<div class="c r" style="left:393.5px;top:288px;width:92.0px;background:#c9dafc;letter-spacing:-0.26px;">0,00</div>
<div class="c" style="left:485.5px;top:288px;width:30.5px;background:#c9dafc;"></div>
<div class="c" style="left:516.0px;top:288px;width:147.5px;background:#c9dafc;letter-spacing:0.04px;">FIRMA SK</div>
<div class="c" style="left:663.5px;top:288px;width:51.5px;background:#c9dafc;"></div>
<div class="sb" style="left:715px;top:18px;width:17px;height:303px"></div>
<div class="th" style="left:715px;top:18px;width:17px;height:116.0px"></div>
<svg class="abs" style="left:718.5px;top:5px" width="10" height="8"><path d="M1.600 6.200l3.400-3.400 3.400 3.400" fill="none" stroke="#0c1320" stroke-width="2.300"/></svg>
<div class="abs" style="left:715px;top:304px;width:17px;height:17px;background:#fafcff"></div>
<svg class="abs" style="left:718.5px;top:309px" width="10" height="8"><path d="M1.600 1.800l3.400 3.400 3.400-3.400" fill="none" stroke="#0c1320" stroke-width="2.300"/></svg>
<div class="sb" style="left:0;top:321px;width:715px;height:17px"></div>
<div class="abs" style="left:0;top:321px;width:17px;height:17px;background:#fafcff"></div>
<div class="th" style="left:17px;top:321px;width:17px;height:17px"></div>
<div class="abs" style="left:698px;top:321px;width:17px;height:17px;background:#fafcff"></div>
<div class="abs" style="left:715px;top:321px;width:17px;height:17px;background:#fafcff"></div>
<svg class="abs" style="left:4.500px;top:324.5px" width="8" height="10"><path d="M5.700 1.600l-3.400 3.400 3.400 3.400" fill="none" stroke="#0c1320" stroke-width="2.300"/></svg>
<svg class="abs" style="left:702px;top:324.5px" width="8" height="10"><path d="M2.300 1.600l3.400 3.400-3.400 3.400" fill="none" stroke="#0c1320" stroke-width="2.300"/></svg>
</div>
<div class="btn " style="left:760px;top:36px;width:128px;letter-spacing:-0.23px;">Zobrazenie dokladu</div>
<div class="btn " style="left:760px;top:64px;width:128px;letter-spacing:-0.21px;">Položky dokladu</div>
<div class="btn " style="left:760px;top:92px;width:128px;letter-spacing:-0.19px;">Obchodný partner</div>
<div class="btn d" style="left:760px;top:120px;width:128px;letter-spacing:-0.18px;">Splátkový kalendár</div>
<div class="btn d" style="left:760px;top:148px;width:128px;letter-spacing:-0.22px;">Schválenie splátok</div>
<div class="grid" style="left:765px;top:181px;width:122px;height:60px"><div class="gh" style="left:0;width:120px;border-right:none">Dátum splatnosti splá...</div><div class="c s" style="left:0;top:18px;width:120px;border-right:none"></div></div>
<div class="abs" style="left:13px;top:410px;width:13px;height:13px;border:1px solid #8da2a8;background:#fff"></div>
<div class="lbl" style="left:29.5px;top:410.5px;letter-spacing:-0.23px;">Len neschválené</div>
<div class="lbl" style="left:135.5px;top:388.5px;letter-spacing:-0.20px;">Celkom neschválené</div>
<div class="fld" style="left:137px;top:406px;width:118px;height:19px;letter-spacing:-0.26px;">0,00</div>
<div class="wb"></div></div>
<div class="win" style="left:323px;top:245px;width:911px;height:531px">
<div class="wt">
<svg style="left:7px;top:6px" width="15" height="17"><polygon points="0.500,0.300 14.300,8.300 0.500,16.300" fill="#fdfdfd"/><path d="M3.800 12.300l7.200-4" stroke="#b5b5b5" stroke-width="1.500"/><path d="M1.200 1.500l0.300 2.500" stroke="#cccccc" stroke-width="1"/></svg>
<span class="t">Bankové účty vlastnej organizácie (SK)</span>
<span class="n" style="left:797px;">13</span>
<svg style="left:835px;top:5px" width="70" height="18" fill="none" stroke="#111"><path d="M3 9.500h10" stroke-width="1.5"/><rect x="28.500" y="5.500" width="9.500" height="9.500" stroke-width="1.5"/><path d="M53.500 5l9 9.500M62.500 5l-9 9.500" stroke-width="2.3"/></svg>
</div>
<div class="grid" style="left:13px;top:36.5px;width:749px;height:481px">
<div class="gh" style="left:0.0px;width:75.5px;letter-spacing:-0.19px;">Poradové číslo</div>
<div class="gh" style="left:75.5px;width:86.5px;letter-spacing:-0.26px;">Číslo účtu</div>
<div class="gh" style="left:162.0px;width:65.5px;letter-spacing:-0.24px;">Kód banky</div>
<div class="gh" style="left:227.5px;width:164.2px;letter-spacing:0.03px;">IBAN</div>
<div class="gh" style="left:391.7px;width:30.8px;letter-spacing:-0.24px;">Mena</div>
<div class="gh" style="left:422.5px;width:77.7px;letter-spacing:-0.28px;">Analytický účet</div>
<div class="gh" style="left:500.2px;width:59.1px;letter-spacing:0.12px;">SWIFT kód</div>
<div class="gh" style="left:559.3px;width:115.0px;letter-spacing:-0.28px;">Celé číslo účtu</div>
<div class="gh" style="left:674.3px;width:55.7px;letter-spacing:-0.11px;">Pobočk...</div>
<div class="gh" style="left:730.0px;width:17.0px;border-right:none"></div>
<div class="c s" style="left:0.0px;top:18px;width:75.5px;letter-spacing:-0.29px;">1</div>
<div class="c s" style="left:75.5px;top:18px;width:86.5px;letter-spacing:-0.29px;">8523691400</div>
<div class="c s" style="left:162.0px;top:18px;width:65.5px;letter-spacing:-0.29px;">5600</div>
<div class="c s" style="left:227.5px;top:18px;width:164.2px;letter-spacing:-0.27px;">SK63 5600 0000 0085 2369 1400</div>
<div class="c s" style="left:391.7px;top:18px;width:30.8px;letter-spacing:-0.12px;">EUR</div>
<div class="c s" style="left:422.5px;top:18px;width:77.7px;letter-spacing:-0.29px;">221001</div>
<div class="c s" style="left:500.2px;top:18px;width:59.1px;letter-spacing:-0.30px;">KOMASK2X</div>
<div class="c s" style="left:559.3px;top:18px;width:115.0px;letter-spacing:-0.23px;">8523691400/5600</div>
<div class="c s" style="left:674.3px;top:18px;width:55.7px;"></div>
<div class="c" style="left:0.0px;top:36px;width:75.5px;background:#fafcff;letter-spacing:-0.29px;">2</div>
<div class="c" style="left:75.5px;top:36px;width:86.5px;background:#fafcff;letter-spacing:-0.29px;">123132169</div>
<div class="c" style="left:162.0px;top:36px;width:65.5px;background:#fafcff;letter-spacing:-0.29px;">0200</div>
<div class="c" style="left:227.5px;top:36px;width:164.2px;background:#b9f97c;letter-spacing:-0.27px;">SK52 0200 0000 0001 2313 2169</div>
<div class="c" style="left:391.7px;top:36px;width:30.8px;background:#b9f97c;letter-spacing:-0.12px;">EUR</div>
<div class="c" style="left:422.5px;top:36px;width:77.7px;background:#fafcff;letter-spacing:-0.29px;">221001</div>
<div class="c" style="left:500.2px;top:36px;width:59.1px;background:#c9dafc;letter-spacing:-0.43px;">SUBASKBX</div>
<div class="c" style="left:559.3px;top:36px;width:115.0px;background:#c9dafc;letter-spacing:-0.23px;">123132169/0200</div>
<div class="c" style="left:674.3px;top:36px;width:55.7px;background:#fafcff;"></div>
<div class="c" style="left:0.0px;top:54px;width:75.5px;background:#ffffff;letter-spacing:-0.29px;">3</div>
<div class="c" style="left:75.5px;top:54px;width:86.5px;background:#ffffff;letter-spacing:-0.29px;">562320147</div>
<div class="c" style="left:162.0px;top:54px;width:65.5px;background:#ffffff;letter-spacing:-0.29px;">8410</div>
<div class="c" style="left:227.5px;top:54px;width:164.2px;background:#dcfdb8;letter-spacing:-0.27px;">SK48 8410 0000 0005 6232 0147</div>
<div class="c" style="left:391.7px;top:54px;width:30.8px;background:#dcfdb8;letter-spacing:-0.39px;">CZK</div>
<div class="c" style="left:422.5px;top:54px;width:77.7px;background:#ffffff;letter-spacing:-0.29px;">221001</div>
<div class="c" style="left:500.2px;top:54px;width:59.1px;background:#dfe9fe;letter-spacing:-0.32px;">RIDBSKBX</div>
<div class="c" style="left:559.3px;top:54px;width:115.0px;background:#dfe9fe;letter-spacing:-0.23px;">562320147/8410</div>
<div class="c" style="left:674.3px;top:54px;width:55.7px;background:#ffffff;"></div>
<div class="sb" style="left:730px;top:18px;width:17px;height:444px"></div>
<div class="th" style="left:730px;top:18px;width:17px;height:222.0px"></div>
<svg class="abs" style="left:733.5px;top:5px" width="10" height="8"><path d="M1.600 6.200l3.400-3.400 3.400 3.400" fill="none" stroke="#0c1320" stroke-width="2.300"/></svg>
<div class="abs" style="left:730px;top:445px;width:17px;height:17px;background:#fafcff"></div>
<svg class="abs" style="left:733.5px;top:450px" width="10" height="8"><path d="M1.600 1.800l3.400 3.400 3.400-3.400" fill="none" stroke="#0c1320" stroke-width="2.300"/></svg>
<div class="sb" style="left:0;top:462px;width:730px;height:17px"></div>
<div class="abs" style="left:0;top:462px;width:17px;height:17px;background:#fafcff"></div>
<div class="th" style="left:17px;top:462px;width:17px;height:17px"></div>
<div class="abs" style="left:713px;top:462px;width:17px;height:17px;background:#fafcff"></div>
<div class="abs" style="left:730px;top:462px;width:17px;height:17px;background:#fafcff"></div>
<svg class="abs" style="left:4.500px;top:465.5px" width="8" height="10"><path d="M5.700 1.600l-3.400 3.400 3.400 3.400" fill="none" stroke="#0c1320" stroke-width="2.300"/></svg>
<svg class="abs" style="left:717px;top:465.5px" width="8" height="10"><path d="M2.300 1.600l3.400 3.400-3.400 3.400" fill="none" stroke="#0c1320" stroke-width="2.300"/></svg>
</div>
<div class="btn " style="left:771px;top:36px;width:128px;letter-spacing:-0.27px;">Bankové výpisy</div>
<div class="btn " style="left:771px;top:64px;width:128px;letter-spacing:-0.21px;">Všetky platby</div>
<div class="btn " style="left:771px;top:92px;width:128px;letter-spacing:-0.28px;">Výpis účtu</div>
<div class="btn " style="left:771px;top:120px;width:128px;letter-spacing:-0.21px;">Nájdi doklad</div>
<div class="btn " style="left:771px;top:148px;width:128px;letter-spacing:-0.20px;">Príkazy na úhradu</div>
<div class="btn " style="left:771px;top:176px;width:128px;letter-spacing:-0.14px;">Položky všetk. prík.</div>
<div class="btn " style="left:771px;top:204px;width:128px;letter-spacing:-0.19px;">Počiatočný stav</div>
<div class="btn " style="left:771px;top:232px;width:128px;letter-spacing:-0.12px;">Stav účtu</div>
<div class="btn " style="left:771px;top:260px;width:128px;letter-spacing:-0.11px;">Stavy všet. účtov</div>
<div class="btn " style="left:771px;top:288px;width:128px;letter-spacing:-0.27px;">Kurzový rozdiel</div>
<div class="btn " style="left:771px;top:316px;width:128px;letter-spacing:-0.32px;">História meny</div>
<div class="btn " style="left:771px;top:344px;width:128px;letter-spacing:-0.21px;">Bankové exporty</div>
<div class="btn " style="left:771px;top:372px;width:128px;letter-spacing:-0.23px;">Bankové importy<svg class="abs" style="left:117px;top:6.0px" width="6" height="10"><polygon points="0,0 5.500,5 0,10" fill="#fff"/></svg></div>
<div class="btn " style="left:771px;top:400px;width:128px;letter-spacing:-0.25px;">Rozpis platieb</div>
<div class="btn " style="left:771px;top:428px;width:128px;letter-spacing:-0.13px;">Párovanie dokladov</div>
<div class="btn " style="left:771px;top:468px;width:128px;letter-spacing:-0.16px;">Protokoly<svg class="abs" style="left:117px;top:6.0px" width="6" height="10"><polygon points="0,0 5.500,5 0,10" fill="#fff"/></svg></div>
<div class="btn " style="left:771px;top:496px;width:128px;height:24px;line-height:23px;letter-spacing:-0.40px;">Rýchly filter<svg class="abs" style="left:117px;top:7.0px" width="6" height="10"><polygon points="0,0 5.500,5 0,10" fill="#fff"/></svg></div>
<div class="wb"></div></div>
<div class="win" style="left:277px;top:348px;width:777px;height:316px">
<div class="wt">
<svg style="left:7px;top:6px" width="15" height="17"><polygon points="0.500,0.300 14.300,8.300 0.500,16.300" fill="#fdfdfd"/><path d="M3.800 12.300l7.200-4" stroke="#b5b5b5" stroke-width="1.500"/><path d="M1.200 1.500l0.300 2.500" stroke="#cccccc" stroke-width="1"/></svg>
<span class="t">Zoznam príkazov na úhradu (SK)</span>
<span class="n" style="left:663px;">9</span>
<svg style="left:701px;top:5px" width="70" height="18" fill="none" stroke="#111"><path d="M3 9.500h10" stroke-width="1.5"/><rect x="28.500" y="5.500" width="9.500" height="9.500" stroke-width="1.5"/><path d="M53.500 5l9 9.500M62.500 5l-9 9.500" stroke-width="2.3"/></svg>
</div>
<div class="grid" style="left:13px;top:36.5px;width:611px;height:260px">
<div class="gh" style="left:0.0px;width:96.0px;letter-spacing:-0.24px;">Číslo príkazu</div>
<div class="gh" style="left:96.0px;width:84.5px;letter-spacing:-0.25px;"><svg style="display:inline-block;vertical-align:0;margin:0 6px 0 1px" width="7" height="7"><polygon points="0.500,0.500 6.500,0.500 3.500,6.500" fill="#c9c9c9" stroke="#8e8e8e" stroke-width=".8"/></svg>Dátum spla...</div>
<div class="gh" style="left:180.5px;width:91.8px;letter-spacing:-0.22px;">Dátum vystavenia</div>
<div class="gh" style="left:272.3px;width:65.0px;letter-spacing:-0.08px;">Čiastka</div>
<div class="gh" style="left:337.3px;width:65.1px;letter-spacing:-0.18px;">Odoslané</div>
<div class="gh" style="left:402.4px;width:34.3px;letter-spacing:-0.24px;">Mena</div>
<div class="gh" style="left:436.7px;width:88.6px;letter-spacing:-0.30px;">Zahraničný príkaz</div>
<div class="gh" style="left:525.3px;width:65.1px;letter-spacing:-0.24px;">Typ príkazu</div>
<div class="gh" style="left:590.4px;width:18.6px;border-right:none"></div>
<div class="c s" style="left:0.0px;top:18px;width:96.0px;letter-spacing:-0.14px;">PU-2017-1-000003</div>
<div class="c s" style="left:96.0px;top:18px;width:84.5px;letter-spacing:-0.24px;">30. 5. 2017</div>
<div class="c s" style="left:180.5px;top:18px;width:91.8px;letter-spacing:-0.24px;">30. 5. 2017</div>
<div class="c r s" style="left:272.3px;top:18px;width:65.0px;letter-spacing:-0.26px;">8 678,00</div>
<div class="c s" style="left:337.3px;top:18px;width:65.1px;"></div>
<div class="c s" style="left:402.4px;top:18px;width:34.3px;letter-spacing:-0.12px;">EUR</div>
<div class="c s" style="left:436.7px;top:18px;width:88.6px;"></div>
<div class="c s" style="left:525.3px;top:18px;width:65.1px;letter-spacing:-0.29px;">Bežný príkaz</div>
<div class="c" style="left:0.0px;top:36px;width:96.0px;background:#c9dafc;letter-spacing:-0.14px;">PU-2017-1-000002</div>
<div class="c" style="left:96.0px;top:36px;width:84.5px;background:#b9f97c;letter-spacing:-0.23px;">5. 5. 2017</div>
<div class="c" style="left:180.5px;top:36px;width:91.8px;background:#b9f97c;letter-spacing:-0.23px;">5. 5. 2017</div>
<div class="c r" style="left:272.3px;top:36px;width:65.0px;background:#c9dafc;"></div>
<div class="c" style="left:337.3px;top:36px;width:65.1px;background:#c9dafc;"></div>
<div class="c" style="left:402.4px;top:36px;width:34.3px;background:#c9dafc;letter-spacing:-0.12px;">EUR</div>
<div class="c" style="left:436.7px;top:36px;width:88.6px;background:#c9dafc;"></div>
<div class="c" style="left:525.3px;top:36px;width:65.1px;background:#c9dafc;letter-spacing:-0.29px;">Bežný príkaz</div>
<div class="c" style="left:0.0px;top:54px;width:96.0px;background:#dfe9fe;letter-spacing:-0.14px;">PU-2017-1-000001</div>
<div class="c" style="left:96.0px;top:54px;width:84.5px;background:#dcfdb8;letter-spacing:-0.24px;">18. 4. 2017</div>
<div class="c" style="left:180.5px;top:54px;width:91.8px;background:#dcfdb8;letter-spacing:-0.24px;">11. 4. 2017</div>
<div class="c r" style="left:272.3px;top:54px;width:65.0px;background:#dfe9fe;"></div>
<div class="c" style="left:337.3px;top:54px;width:65.1px;background:#dfe9fe;"></div>
<div class="c" style="left:402.4px;top:54px;width:34.3px;background:#dfe9fe;letter-spacing:-0.12px;">EUR</div>
<div class="c" style="left:436.7px;top:54px;width:88.6px;background:#dfe9fe;letter-spacing:-0.03px;">Áno</div>
<div class="c" style="left:525.3px;top:54px;width:65.1px;background:#dfe9fe;letter-spacing:-0.23px;">Bežný príkaz-</div>
<div class="c" style="left:0.0px;top:72px;width:96.0px;background:#c9dafc;letter-spacing:-0.14px;">PU-2016-1-000003</div>
<div class="c" style="left:96.0px;top:72px;width:84.5px;background:#b9f97c;letter-spacing:-0.24px;">2. 12. 2016</div>
<div class="c" style="left:180.5px;top:72px;width:91.8px;background:#b9f97c;letter-spacing:-0.24px;">1. 12. 2016</div>
<div class="c r" style="left:272.3px;top:72px;width:65.0px;background:#c9dafc;"></div>
<div class="c" style="left:337.3px;top:72px;width:65.1px;background:#c9dafc;letter-spacing:-0.03px;">Áno</div>
<div class="c" style="left:402.4px;top:72px;width:34.3px;background:#c9dafc;letter-spacing:-0.12px;">EUR</div>
<div class="c" style="left:436.7px;top:72px;width:88.6px;background:#c9dafc;"></div>
<div class="c" style="left:525.3px;top:72px;width:65.1px;background:#c9dafc;letter-spacing:-0.29px;">Bežný príkaz</div>
<div class="sb" style="left:592px;top:18px;width:17px;height:223px"></div>
<div class="th" style="left:592px;top:18px;width:17px;height:144.5px"></div>
<svg class="abs" style="left:595.5px;top:5px" width="10" height="8"><path d="M1.600 6.200l3.400-3.400 3.400 3.400" fill="none" stroke="#0c1320" stroke-width="2.300"/></svg>
<div class="abs" style="left:592px;top:224px;width:17px;height:17px;background:#fafcff"></div>
<svg class="abs" style="left:595.5px;top:229px" width="10" height="8"><path d="M1.600 1.800l3.400 3.400 3.400-3.400" fill="none" stroke="#0c1320" stroke-width="2.300"/></svg>
<div class="sb" style="left:0;top:241px;width:592px;height:17px"></div>
<div class="abs" style="left:0;top:241px;width:17px;height:17px;background:#fafcff"></div>
<div class="th" style="left:17px;top:241px;width:17px;height:17px"></div>
<div class="abs" style="left:575px;top:241px;width:17px;height:17px;background:#fafcff"></div>
<div class="abs" style="left:592px;top:241px;width:17px;height:17px;background:#fafcff"></div>
<svg class="abs" style="left:4.500px;top:244.5px" width="8" height="10"><path d="M5.700 1.600l-3.400 3.400 3.400 3.400" fill="none" stroke="#0c1320" stroke-width="2.300"/></svg>
<svg class="abs" style="left:579px;top:244.5px" width="8" height="10"><path d="M2.300 1.600l3.400 3.400-3.400 3.400" fill="none" stroke="#0c1320" stroke-width="2.300"/></svg>
</div>
<div class="btn a" style="left:637px;top:36px;width:128px;letter-spacing:-0.21px;">Položky príkazu</div>
<div class="btn " style="left:637px;top:64px;width:128px;letter-spacing:-0.27px;">Zrušenie "Odoslané"</div>
<div class="btn " style="left:637px;top:252px;width:128px;"></div>
<div class="btn " style="left:637px;top:280px;width:128px;"></div>
<div class="wb"></div></div>
<div class="win" style="left:209px;top:462px;width:816px;height:455px">
<div class="wt" style="background:#1c4767;border-bottom:none">
<svg style="left:7px;top:6px" width="15" height="17"><polygon points="0.500,0.300 14.300,8.300 0.500,16.300" fill="#fff"/><path d="M3.500 12.500l7.500-4.200" stroke="#cfcfcf" stroke-width="1.600"/></svg>
<span class="t" style="color:#fff;left:26.500px">Položky príkazu na úhradu</span>
<span class="n" style="left:702px;color:#fff">11</span>
<svg style="left:740px;top:5px" width="70" height="18" fill="none" stroke="#fff"><path d="M3 9.500h10" stroke-width="1"/><rect x="28.500" y="5.500" width="9.500" height="9.500" stroke-width="1"/><path d="M53.500 5l9 9.500M62.500 5l-9 9.500" stroke-width="1.2"/></svg>
</div>
<div class="abs" style="left:12px;top:56px;width:650px;height:339px;border:1px solid #c9dbf7;background:#fafcff"></div>
<div class="abs" style="left:12px;top:36px;width:55.500px;height:21px;border:1px solid #c9dbf7;border-bottom:none;background:#fafcff;border-radius:2px 2px 0 0"></div>
<div class="lbl" style="left:19.5px;top:39.5px;color:#333;letter-spacing:-0.26px;">Seznam</div>
<div class="lbl" style="left:72.5px;top:41px;letter-spacing:-0.36px;">Detail</div>
<div class="grid" style="left:25px;top:68.5px;width:624px;height:312.5px">
<div class="gh" style="left:0.0px;width:40.5px;letter-spacing:-0.13px;">Riadok</div>
<div class="gh" style="left:40.5px;width:115.5px;letter-spacing:-0.24px;">Číslo príkazu</div>
<div class="gh" style="left:156.0px;width:87.0px;letter-spacing:-0.38px;">Variabilný symbol</div>
<div class="gh" style="left:243.0px;width:81.5px;letter-spacing:-0.12px;">Čiastka k platbe</div>
<div class="gh" style="left:324.5px;width:30.8px;letter-spacing:-0.24px;">Mena</div>
<div class="gh" style="left:355.3px;width:100.9px;letter-spacing:-0.23px;">Platený doklad</div>
<div class="gh" style="left:456.2px;width:95.1px;letter-spacing:-0.19px;">Obchodný partner</div>
<div class="gh" style="left:551.3px;width:53.7px;letter-spacing:-0.00px;">IČ DPH</div>
<div class="gh" style="left:605.0px;width:17.0px;border-right:none"></div>
<div class="c s" style="left:0.0px;top:18px;width:40.5px;outline:1px solid #e0242c;outline-offset:-1px;letter-spacing:-0.29px;">1</div>
<div class="c s" style="left:40.5px;top:18px;width:115.5px;letter-spacing:-0.12px;">PU-2017-1-000003(1)</div>
<div class="c s" style="left:156.0px;top:18px;width:87.0px;letter-spacing:-0.29px;">23654178</div>
<div class="c r s" style="left:243.0px;top:18px;width:81.5px;letter-spacing:-0.27px;">120,00</div>
<div class="c s" style="left:324.5px;top:18px;width:30.8px;"></div>
<div class="c s" style="left:355.3px;top:18px;width:100.9px;letter-spacing:-0.16px;">OZ-2017-4-000001</div>
<div class="c s" style="left:456.2px;top:18px;width:95.1px;letter-spacing:-0.24px;">DEMO TEST SK</div>
<div class="c s" style="left:551.3px;top:18px;width:53.7px;letter-spacing:-0.32px;">SK2023654</div>
<div class="c" style="left:0.0px;top:36px;width:40.5px;background:#c9dafc;letter-spacing:-0.29px;">2</div>
<div class="c" style="left:40.5px;top:36px;width:115.5px;background:#c9dafc;letter-spacing:-0.12px;">PU-2017-1-000003(2)</div>
<div class="c" style="left:156.0px;top:36px;width:87.0px;background:#b9f97c;letter-spacing:-0.29px;">23455</div>
<div class="c r" style="left:243.0px;top:36px;width:81.5px;background:#b9f97c;letter-spacing:-0.26px;">48,00</div>
<div class="c" style="left:324.5px;top:36px;width:30.8px;background:#c9dafc;"></div>
<div class="c" style="left:355.3px;top:36px;width:100.9px;background:#fafcff;letter-spacing:-0.10px;">FPT-2017-1-000011</div>
<div class="c" style="left:456.2px;top:36px;width:95.1px;background:#b9f97c;letter-spacing:-0.04px;">DCIT, s.r.o.</div>
<div class="c" style="left:551.3px;top:36px;width:53.7px;background:#fafcff;"></div>
<div class="c" style="left:0.0px;top:54px;width:40.5px;background:#dfe9fe;letter-spacing:-0.29px;">3</div>
<div class="c" style="left:40.5px;top:54px;width:115.5px;background:#dfe9fe;letter-spacing:-0.12px;">PU-2017-1-000003(3)</div>
<div class="c" style="left:156.0px;top:54px;width:87.0px;background:#dcfdb8;letter-spacing:-0.29px;">6788</div>
<div class="c r" style="left:243.0px;top:54px;width:81.5px;background:#dcfdb8;letter-spacing:-0.27px;">120,00</div>
<div class="c" style="left:324.5px;top:54px;width:30.8px;background:#dfe9fe;"></div>
<div class="c" style="left:355.3px;top:54px;width:100.9px;background:#ffffff;letter-spacing:-0.10px;">FPT-2017-1-000008</div>
<div class="c" style="left:456.2px;top:54px;width:95.1px;background:#dcfdb8;letter-spacing:-0.12px;">DODAVATEL s.r.o.</div>
<div class="c" style="left:551.3px;top:54px;width:53.7px;background:#ffffff;letter-spacing:-0.34px;">SKSK20220</div>
<div class="c" style="left:0.0px;top:72px;width:40.5px;background:#c9dafc;letter-spacing:-0.29px;">4</div>
<div class="c" style="left:40.5px;top:72px;width:115.5px;background:#c9dafc;letter-spacing:-0.12px;">PU-2017-1-000003(4)</div>
<div class="c" style="left:156.0px;top:72px;width:87.0px;background:#b9f97c;letter-spacing:-0.29px;">34567890</div>
<div class="c r" style="left:243.0px;top:72px;width:81.5px;background:#b9f97c;letter-spacing:-0.26px;">48,00</div>
<div class="c" style="left:324.5px;top:72px;width:30.8px;background:#c9dafc;"></div>
<div class="c" style="left:355.3px;top:72px;width:100.9px;background:#fafcff;letter-spacing:-0.10px;">FPT-2017-1-000010</div>
<div class="c" style="left:456.2px;top:72px;width:95.1px;background:#b9f97c;letter-spacing:-0.04px;">DCIT, s.r.o.</div>
<div class="c" style="left:551.3px;top:72px;width:53.7px;background:#fafcff;"></div>
<div class="c" style="left:0.0px;top:90px;width:40.5px;background:#dfe9fe;letter-spacing:-0.29px;">5</div>
<div class="c" style="left:40.5px;top:90px;width:115.5px;background:#dfe9fe;letter-spacing:-0.12px;">PU-2017-1-000003(5)</div>
<div class="c" style="left:156.0px;top:90px;width:87.0px;background:#dcfdb8;letter-spacing:-0.29px;">2017002</div>
<div class="c r" style="left:243.0px;top:90px;width:81.5px;background:#dcfdb8;letter-spacing:-0.26px;">5 200,00</div>
<div class="c" style="left:324.5px;top:90px;width:30.8px;background:#dfe9fe;"></div>
<div class="c" style="left:355.3px;top:90px;width:100.9px;background:#ffffff;letter-spacing:-0.10px;">FPT-2017-1-000006</div>
<div class="c" style="left:456.2px;top:90px;width:95.1px;background:#dcfdb8;letter-spacing:-0.12px;">DODAVATEL s.r.o.</div>
<div class="c" style="left:551.3px;top:90px;width:53.7px;background:#ffffff;letter-spacing:-0.34px;">SKSK20220</div>
<div class="c" style="left:0.0px;top:108px;width:40.5px;background:#c9dafc;letter-spacing:-0.29px;">6</div>
<div class="c" style="left:40.5px;top:108px;width:115.5px;background:#c9dafc;letter-spacing:-0.12px;">PU-2017-1-000003(6)</div>
<div class="c" style="left:156.0px;top:108px;width:87.0px;background:#b9f97c;letter-spacing:-0.29px;">6789</div>
<div class="c r" style="left:243.0px;top:108px;width:81.5px;background:#b9f97c;letter-spacing:-0.27px;">120,00</div>
<div class="c" style="left:324.5px;top:108px;width:30.8px;background:#c9dafc;"></div>
<div class="c" style="left:355.3px;top:108px;width:100.9px;background:#fafcff;letter-spacing:-0.10px;">FPT-2017-1-000007</div>
<div class="c" style="left:456.2px;top:108px;width:95.1px;background:#b9f97c;letter-spacing:-0.12px;">DODAVATEL s.r.o.</div>
<div class="c" style="left:551.3px;top:108px;width:53.7px;background:#fafcff;letter-spacing:-0.34px;">SKSK20220</div>
<div class="c" style="left:0.0px;top:126px;width:40.5px;background:#dfe9fe;letter-spacing:-0.29px;">7</div>
<div class="c" style="left:40.5px;top:126px;width:115.5px;background:#dfe9fe;letter-spacing:-0.12px;">PU-2017-1-000003(7)</div>
<div class="c" style="left:156.0px;top:126px;width:87.0px;background:#dcfdb8;letter-spacing:-0.29px;">6790</div>
<div class="c r" style="left:243.0px;top:126px;width:81.5px;background:#dcfdb8;letter-spacing:-0.27px;">120,00</div>
<div class="c" style="left:324.5px;top:126px;width:30.8px;background:#dfe9fe;"></div>
<div class="c" style="left:355.3px;top:126px;width:100.9px;background:#ffffff;letter-spacing:-0.10px;">FPT-2017-1-000009</div>
<div class="c" style="left:456.2px;top:126px;width:95.1px;background:#dcfdb8;letter-spacing:-0.12px;">DODAVATEL s.r.o.</div>
<div class="c" style="left:551.3px;top:126px;width:53.7px;background:#ffffff;letter-spacing:-0.34px;">SKSK20220</div>
<div class="c" style="left:0.0px;top:144px;width:40.5px;background:#c9dafc;letter-spacing:-0.29px;">8</div>
<div class="c" style="left:40.5px;top:144px;width:115.5px;background:#c9dafc;letter-spacing:-0.12px;">PU-2017-1-000003(8)</div>
<div class="c" style="left:156.0px;top:144px;width:87.0px;background:#b9f97c;letter-spacing:-0.29px;">12345</div>
<div class="c r" style="left:243.0px;top:144px;width:81.5px;background:#b9f97c;letter-spacing:-0.27px;">480,00</div>
<div class="c" style="left:324.5px;top:144px;width:30.8px;background:#c9dafc;"></div>
<div class="c" style="left:355.3px;top:144px;width:100.9px;background:#fafcff;letter-spacing:-0.19px;">ZLP-2018-5-000001</div>
<div class="c" style="left:456.2px;top:144px;width:95.1px;background:#b9f97c;letter-spacing:-0.12px;">DODAVATEL s.r.o.</div>
<div class="c" style="left:551.3px;top:144px;width:53.7px;background:#fafcff;letter-spacing:-0.34px;">SKSK20220</div>
<div class="c" style="left:0.0px;top:162px;width:40.5px;background:#dfe9fe;letter-spacing:-0.29px;">9</div>
<div class="c" style="left:40.5px;top:162px;width:115.5px;background:#dfe9fe;letter-spacing:-0.12px;">PU-2017-1-000003(9)</div>
<div class="c" style="left:156.0px;top:162px;width:87.0px;background:#dcfdb8;letter-spacing:-0.29px;">32132132</div>
<div class="c r" style="left:243.0px;top:162px;width:81.5px;background:#dcfdb8;letter-spacing:-0.27px;">222,00</div>
<div class="c" style="left:324.5px;top:162px;width:30.8px;background:#dfe9fe;"></div>
<div class="c" style="left:355.3px;top:162px;width:100.9px;background:#ffffff;letter-spacing:-0.09px;">FPP-2015-3-000001</div>
<div class="c" style="left:456.2px;top:162px;width:95.1px;background:#dcfdb8;letter-spacing:0.04px;">FIRMA SK</div>
<div class="c" style="left:551.3px;top:162px;width:53.7px;background:#ffffff;letter-spacing:-0.32px;">SK2001452</div>
<div class="c" style="left:0.0px;top:180px;width:40.5px;background:#c9dafc;letter-spacing:-0.29px;">10</div>
<div class="c" style="left:40.5px;top:180px;width:115.5px;background:#c9dafc;letter-spacing:-0.12px;">PU-2017-1-000003(10)</div>
<div class="c" style="left:156.0px;top:180px;width:87.0px;background:#b9f97c;letter-spacing:-0.29px;">65465465</div>
<div class="c r" style="left:243.0px;top:180px;width:81.5px;background:#b9f97c;letter-spacing:-0.26px;">1 200,00</div>
<div class="c" style="left:324.5px;top:180px;width:30.8px;background:#c9dafc;"></div>
<div class="c" style="left:355.3px;top:180px;width:100.9px;background:#fafcff;letter-spacing:-0.10px;">FPT-2016-1-000001</div>
<div class="c" style="left:456.2px;top:180px;width:95.1px;background:#b9f97c;letter-spacing:0.04px;">FIRMA SK</div>
<div class="c" style="left:551.3px;top:180px;width:53.7px;background:#fafcff;letter-spacing:-0.32px;">SK2001452</div>
<div class="c" style="left:0.0px;top:198px;width:40.5px;background:#dfe9fe;letter-spacing:-0.29px;">11</div>
<div class="c" style="left:40.5px;top:198px;width:115.5px;background:#dfe9fe;letter-spacing:-0.12px;">PU-2017-1-000003(11)</div>
<div class="c" style="left:156.0px;top:198px;width:87.0px;background:#dcfdb8;letter-spacing:-0.29px;">111222333</div>
<div class="c r" style="left:243.0px;top:198px;width:81.5px;background:#dcfdb8;letter-spacing:-0.26px;">1 000,00</div>
<div class="c" style="left:324.5px;top:198px;width:30.8px;background:#dfe9fe;"></div>
<div class="c" style="left:355.3px;top:198px;width:100.9px;background:#ffffff;letter-spacing:-0.10px;">FPT-2016-1-000002</div>
<div class="c" style="left:456.2px;top:198px;width:95.1px;background:#dcfdb8;letter-spacing:0.04px;">FIRMA SK</div>
<div class="c" style="left:551.3px;top:198px;width:53.7px;background:#ffffff;letter-spacing:-0.32px;">SK2001452</div>
<div class="sb" style="left:605px;top:18px;width:17px;height:275.5px"></div>
<div class="th" style="left:605px;top:18px;width:17px;height:135.5px"></div>
<svg class="abs" style="left:608.5px;top:5px" width="10" height="8"><path d="M1.600 6.200l3.400-3.400 3.400 3.400" fill="none" stroke="#0c1320" stroke-width="2.300"/></svg>
<div class="abs" style="left:605px;top:276.5px;width:17px;height:17px;background:#fafcff"></div>
<svg class="abs" style="left:608.5px;top:281.5px" width="10" height="8"><path d="M1.600 1.800l3.400 3.400 3.400-3.400" fill="none" stroke="#0c1320" stroke-width="2.300"/></svg>
<div class="sb" style="left:0;top:293.5px;width:605px;height:17px"></div>
<div class="abs" style="left:0;top:293.5px;width:17px;height:17px;background:#fafcff"></div>
<div class="th" style="left:17px;top:293.5px;width:17px;height:17px"></div>
<div class="abs" style="left:588px;top:293.5px;width:17px;height:17px;background:#fafcff"></div>
<div class="abs" style="left:605px;top:293.5px;width:17px;height:17px;background:#fafcff"></div>
<svg class="abs" style="left:4.500px;top:297.0px" width="8" height="10"><path d="M5.700 1.600l-3.400 3.400 3.400 3.400" fill="none" stroke="#0c1320" stroke-width="2.300"/></svg>
<svg class="abs" style="left:592px;top:297.0px" width="8" height="10"><path d="M2.300 1.600l3.400 3.400-3.400 3.400" fill="none" stroke="#0c1320" stroke-width="2.300"/></svg>
</div>
<div class="btn d" style="left:674px;top:56px;width:128px;letter-spacing:-0.20px;">Rozpis príkazu</div>
<div class="btn d" style="left:674px;top:84px;width:128px;letter-spacing:-0.24px;">Export rozpisu</div>
<div class="btn d" style="left:674px;top:112px;width:128px;letter-spacing:-0.27px;">Zrušenie "Odoslané"</div>
<div class="btn " style="left:674px;top:359px;width:128px;letter-spacing:-0.22px;">Kontrola položiek</div>
<div class="btn " style="left:674px;top:395px;width:128px;letter-spacing:-0.21px;">Multivýber - záväzky</div>
<div class="btn " style="left:674px;top:422px;width:128px;letter-spacing:-0.30px;">Multivýber - mzdy</div>
<div class="lbl" style="left:11.5px;top:406.5px;letter-spacing:-0.15px;">Celkom k úhrade</div>
<div class="lbl" style="left:139px;top:406.5px;letter-spacing:-0.24px;">Mena</div>
<div class="fld" style="left:13px;top:424px;width:118px;height:19px;letter-spacing:-0.26px;">8 678,00</div>
<div class="fld" style="left:141px;top:424px;width:66px;height:19px"></div>
<div class="wb" style="border-color:#2c5d8c;border-top-color:#1c4767"></div></div>
</div>
</body></html>
